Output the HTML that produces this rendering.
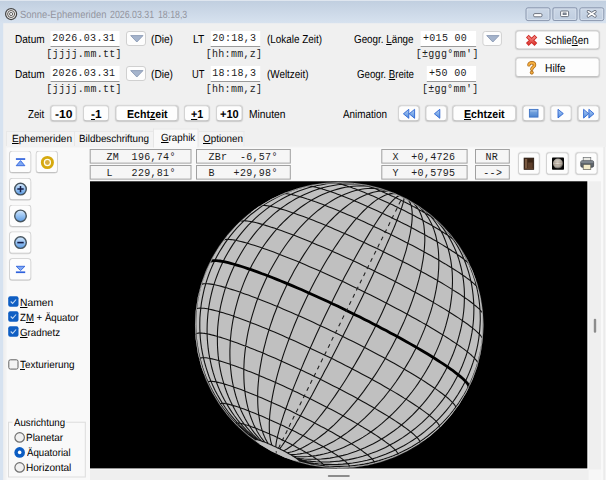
<!DOCTYPE html>
<html><head><meta charset="utf-8"><title>Sonne-Ephemeriden</title>
<style>
*{box-sizing:border-box;margin:0;padding:0}
html,body{width:606px;height:480px;overflow:hidden;background:#f0f0f0}
body{font-family:"Liberation Sans",sans-serif;color:#000;position:relative}
.a{position:absolute}
.t{position:absolute;white-space:nowrap;line-height:14px;text-rendering:geometricPrecision;transform-origin:0 0;font-family:"Liberation Sans",sans-serif}
.b{font-weight:bold}
.m{position:absolute;white-space:pre;line-height:13px;letter-spacing:0.3px;font-family:"Liberation Mono",monospace}
u{text-decoration:underline;text-underline-offset:1px}
</style></head><body>
<div class="a" style="left:0px;top:0px;width:606px;height:23px;transform-origin:0 0;transform:translate(0.00px,0.00px) scale(1.0000,1.0087);background:linear-gradient(#c0cedf,#d7e2ef)"></div>
<div class="a" style="left:0px;top:0px;width:606px;height:1px;background:#dfe6ef"></div>
<div class="a" style="left:0px;top:23px;width:3px;height:457px;transform-origin:0 0;transform:translate(0.00px,0.00px) scale(1.0667,1.0000);background:#d6e2f0"></div>
<svg class="a" style="left:4px;top:7px" width="14" height="14" viewBox="0 0 14 14"><circle cx="7.1" cy="7" r="5.5" fill="#f1f2f4" stroke="#454545" stroke-width="1.25"/><circle cx="7.1" cy="7" r="3.5" fill="none" stroke="#5d5750" stroke-width="1"/><circle cx="7.1" cy="7" r="1.6" fill="none" stroke="#555" stroke-width="0.9"/></svg>
<div class="t" style="left:20.12px;top:8.25px;font-size:10.5px;color:#93959f;transform:scaleX(0.8971)">Sonne-Ephemeriden</div>
<div class="t" style="left:109.63px;top:8.25px;font-size:10.5px;color:#93959f;transform:scaleX(0.8392)">2026.03.31</div>
<div class="t" style="left:157.83px;top:8.25px;font-size:10.5px;color:#93959f;transform:scaleX(0.8335)">18:18,3</div>
<div class="a" style="left:525px;top:7px;width:25px;height:14px;transform-origin:0 0;transform:translate(0.50px,0.30px) scale(1.0000,0.9857);border:1px solid #8a97ae;border-radius:2.5px;background:linear-gradient(#cbd7e6,#bfcddf);box-shadow:inset 0 0 0 1px #d9e2ee"></div>
<div class="a" style="left:552px;top:7px;width:25px;height:14px;transform-origin:0 0;transform:translate(0.40px,0.30px) scale(1.0040,0.9857);border:1px solid #8a97ae;border-radius:2.5px;background:linear-gradient(#cbd7e6,#bfcddf);box-shadow:inset 0 0 0 1px #d9e2ee"></div>
<div class="a" style="left:579px;top:7px;width:25px;height:14px;transform-origin:0 0;transform:translate(0.30px,0.30px) scale(1.0000,0.9857);border:1px solid #8a97ae;border-radius:2.5px;background:linear-gradient(#cbd7e6,#bfcddf);box-shadow:inset 0 0 0 1px #d9e2ee"></div>
<svg class="a" style="left:526px;top:7px" width="80" height="15" viewBox="0 0 80 15"><rect x="7.6" y="6.6" width="8.4" height="3.2" rx="1.2" fill="#fff" stroke="#5d6470" stroke-width="0.9"/><rect x="34.6" y="4" width="8" height="5.6" rx="1" fill="#fff" stroke="#5d6470" stroke-width="0.9"/><rect x="37" y="5.9" width="3.2" height="1.8" fill="#8a93a3" stroke="#5d6470" stroke-width="0.6"/><path d="M62.3 4.6 L69 9 M69 4.6 L62.3 9" stroke="#5d6470" stroke-width="3.2" stroke-linecap="round"/><path d="M62.3 4.6 L69 9 M69 4.6 L62.3 9" stroke="#fff" stroke-width="1.7" stroke-linecap="round"/></svg>
<div class="t" style="left:14.93px;top:33.25px;font-size:11.5px;color:#000;transform:scaleX(0.8739)">Datum</div>
<div class="a" style="left:50px;top:31px;width:69px;height:16px;transform-origin:0 0;transform:translate(0.50px,0.00px) scale(1.0000,1.0000);background:#fff;border-bottom:1px solid #9a9a9a"></div>
<div class="m" style="left:52.30px;top:32.20px;font-size:10.0px;color:#1c1c1c">2026.03.31</div>
<div class="a" style="left:126px;top:31px;width:20px;height:15px;background:#fdfdfd;border:1px solid #d0d0d0;border-radius:3px"></div>
<svg class="a" style="left:129.6px;top:35px" width="14" height="8" viewBox="0 0 14 8"><path d="M0.7 0.6 H13 L6.85 7 Z" fill="#a5b4cc" stroke="#8292ae" stroke-width="0.8" stroke-linejoin="round"/></svg>
<div class="t" style="left:151.32px;top:33.25px;font-size:11.5px;color:#000;transform:scaleX(0.8830)">(Die)</div>
<div class="m" style="left:46.30px;top:47.60px;font-size:10.0px;color:#1c1c1c">[jjjj.mm.tt]</div>
<div class="a" style="left:210px;top:31px;width:50px;height:16px;transform-origin:0 0;transform:translate(0.70px,0.00px) scale(0.9900,1.0000);background:#fff;border-bottom:1px solid #9a9a9a"></div>
<div class="m" style="left:205.70px;top:47.60px;font-size:10.0px;color:#1c1c1c">[hh:mm,z]</div>
<div class="t" style="left:14.93px;top:68.25px;font-size:11.5px;color:#000;transform:scaleX(0.8739)">Datum</div>
<div class="a" style="left:50px;top:66px;width:69px;height:16px;transform-origin:0 0;transform:translate(0.50px,0.00px) scale(1.0000,1.0000);background:#fff;border-bottom:1px solid #9a9a9a"></div>
<div class="m" style="left:52.30px;top:67.20px;font-size:10.0px;color:#1c1c1c">2026.03.31</div>
<div class="a" style="left:126px;top:66px;width:20px;height:15px;background:#fdfdfd;border:1px solid #d0d0d0;border-radius:3px"></div>
<svg class="a" style="left:129.6px;top:70px" width="14" height="8" viewBox="0 0 14 8"><path d="M0.7 0.6 H13 L6.85 7 Z" fill="#a5b4cc" stroke="#8292ae" stroke-width="0.8" stroke-linejoin="round"/></svg>
<div class="t" style="left:151.32px;top:68.25px;font-size:11.5px;color:#000;transform:scaleX(0.8830)">(Die)</div>
<div class="m" style="left:46.30px;top:82.60px;font-size:10.0px;color:#1c1c1c">[jjjj.mm.tt]</div>
<div class="a" style="left:210px;top:66px;width:50px;height:16px;transform-origin:0 0;transform:translate(0.70px,0.00px) scale(0.9900,1.0000);background:#fff;border-bottom:1px solid #9a9a9a"></div>
<div class="m" style="left:205.70px;top:82.60px;font-size:10.0px;color:#1c1c1c">[hh:mm,z]</div>
<div class="t" style="left:192.52px;top:33.25px;font-size:11.5px;color:#000;transform:scaleX(0.8912)">LT</div>
<div class="t" style="left:192.34px;top:68.25px;font-size:11.5px;color:#000;transform:scaleX(0.8154)">UT</div>
<div class="m" style="left:212.30px;top:32.20px;font-size:10.0px;color:#1c1c1c">20:18,3</div>
<div class="m" style="left:212.30px;top:67.20px;font-size:10.0px;color:#1c1c1c">18:18,3</div>
<div class="t" style="left:267.33px;top:33.25px;font-size:11.5px;color:#000;transform:scaleX(0.8606)">(Lokale Zeit)</div>
<div class="t" style="left:267.33px;top:68.25px;font-size:11.5px;color:#000;transform:scaleX(0.8584)">(Weltzeit)</div>
<div class="t" style="left:354.33px;top:33.25px;font-size:11.5px;color:#000;transform:scaleX(0.8537)">Geogr. <u>L</u>änge</div>
<div class="t" style="left:356.83px;top:68.25px;font-size:11.5px;color:#000;transform:scaleX(0.8412)">Geogr. <u>B</u>reite</div>
<div class="a" style="left:420px;top:31px;width:56px;height:16px;transform-origin:0 0;transform:translate(0.60px,0.00px) scale(0.9911,1.0000);background:#fff;border-bottom:1px solid #9a9a9a"></div>
<div class="a" style="left:426px;top:66px;width:49px;height:16px;transform-origin:0 0;transform:translate(0.80px,0.00px) scale(1.0061,1.0000);background:#fff;border-bottom:1px solid #9a9a9a"></div>
<div class="m" style="left:423.00px;top:32.20px;font-size:10.0px;color:#1c1c1c">+015 00</div>
<div class="m" style="left:429.00px;top:67.20px;font-size:10.0px;color:#1c1c1c">+50 00</div>
<div class="a" style="left:482px;top:31px;width:20px;height:15px;transform-origin:0 0;transform:translate(0.40px,0.00px) scale(0.9750,1.0000);background:#fdfdfd;border:1px solid #d0d0d0;border-radius:3px"></div>
<svg class="a" style="left:485.6px;top:35px" width="14" height="8" viewBox="0 0 14 8"><path d="M0.7 0.6 H13 L6.85 7 Z" fill="#a5b4cc" stroke="#8292ae" stroke-width="0.8" stroke-linejoin="round"/></svg>
<div class="m" style="left:415.70px;top:47.60px;font-size:10.0px;color:#1c1c1c">[±ggg°mm']</div>
<div class="m" style="left:421.90px;top:82.60px;font-size:10.0px;color:#1c1c1c">[±gg°mm']</div>
<div class="a" style="left:515px;top:30px;width:84px;height:19px;transform-origin:0 0;transform:translate(0.40px,0.40px) scale(1.0024,1.0105);background:#fdfdfd;border:1px solid #d3d3d3;border-bottom-color:#c2c2c2;border-radius:3.5px;box-shadow:0 0 1.2px rgba(0,0,0,0.16)"></div>
<div class="a" style="left:515px;top:57px;width:84px;height:19px;transform-origin:0 0;transform:translate(0.40px,0.60px) scale(1.0024,1.0211);background:#fdfdfd;border:1px solid #d3d3d3;border-bottom-color:#c2c2c2;border-radius:3.5px;box-shadow:0 0 1.2px rgba(0,0,0,0.16)"></div>
<div class="t" style="left:545.33px;top:34.25px;font-size:11.5px;color:#000;transform:scaleX(0.8546)">Schlie<u>ß</u>en</div>
<div class="t" style="left:545.32px;top:62.25px;font-size:11.5px;color:#000;transform:scaleX(0.8911)">Hilfe</div>
<svg class="a" style="left:524.5px;top:34px" width="14" height="13" viewBox="0 0 14 13"><defs><linearGradient id="rx" x1="0" y1="0" x2="0" y2="1"><stop offset="0" stop-color="#f58a84"/><stop offset="1" stop-color="#dc3a34"/></linearGradient></defs><path d="M2.3 2.1 L10.9 10.5 M10.9 2.1 L2.3 10.5" stroke="#cf2a26" stroke-width="3.9" stroke-linecap="butt"/><path d="M2.9 2.7 L10.3 9.9 M10.3 2.7 L2.9 9.9" stroke="url(#rx)" stroke-width="2.1" stroke-linecap="butt"/></svg>
<svg class="a" style="left:525.6px;top:60.6px" width="12" height="15" viewBox="0 0 12 15"><path d="M2.9 3.9 C2.9 1.0 8.6 1.0 8.6 3.9 C8.6 6.1 5.8 6 5.8 8.3" fill="none" stroke="#a86410" stroke-width="3.3" stroke-linecap="round"/><path d="M2.9 3.9 C2.9 1.0 8.6 1.0 8.6 3.9 C8.6 6.1 5.8 6 5.8 8.3" fill="none" stroke="#f6b040" stroke-width="1.8" stroke-linecap="round"/><circle cx="5.8" cy="11.6" r="1.55" fill="#f6b040" stroke="#a86410" stroke-width="0.9"/></svg>
<div class="t" style="left:27.73px;top:108.25px;font-size:11.5px;color:#000;transform:scaleX(0.8451)">Zeit</div>
<div class="t" style="left:249.42px;top:108.25px;font-size:11.5px;color:#000;transform:scaleX(0.8921)">Minuten</div>
<div class="t" style="left:343.08px;top:108.25px;font-size:11.5px;color:#000;transform:scaleX(0.8604)">Animation</div>
<div class="a" style="left:50px;top:105px;width:26px;height:16px;transform-origin:0 0;transform:translate(0.50px,0.30px) scale(1.0000,1.0000);background:#fdfdfd;border:1px solid #d3d3d3;border-bottom-color:#c2c2c2;border-radius:3.5px;box-shadow:0 0 1.2px rgba(0,0,0,0.16)"></div>
<div class="a" style="left:83px;top:105px;width:26px;height:16px;transform-origin:0 0;transform:translate(0.00px,0.30px) scale(1.0000,1.0000);background:#fdfdfd;border:1px solid #d3d3d3;border-bottom-color:#c2c2c2;border-radius:3.5px;box-shadow:0 0 1.2px rgba(0,0,0,0.16)"></div>
<div class="a" style="left:115px;top:105px;width:62px;height:16px;transform-origin:0 0;transform:translate(0.50px,0.30px) scale(1.0081,1.0000);background:#fdfdfd;border:1px solid #d3d3d3;border-bottom-color:#c2c2c2;border-radius:3.5px;box-shadow:0 0 1.2px rgba(0,0,0,0.16)"></div>
<div class="a" style="left:184px;top:105px;width:26px;height:16px;transform-origin:0 0;transform:translate(0.00px,0.30px) scale(0.9808,1.0000);background:#fdfdfd;border:1px solid #d3d3d3;border-bottom-color:#c2c2c2;border-radius:3.5px;box-shadow:0 0 1.2px rgba(0,0,0,0.16)"></div>
<div class="a" style="left:216px;top:105px;width:26px;height:16px;transform-origin:0 0;transform:translate(0.00px,0.30px) scale(1.0192,1.0000);background:#fdfdfd;border:1px solid #d3d3d3;border-bottom-color:#c2c2c2;border-radius:3.5px;box-shadow:0 0 1.2px rgba(0,0,0,0.16)"></div>
<div class="a" style="left:398px;top:105px;width:22px;height:16px;transform-origin:0 0;transform:translate(0.00px,0.30px) scale(0.9773,1.0000);background:#fdfdfd;border:1px solid #d3d3d3;border-bottom-color:#c2c2c2;border-radius:3.5px;box-shadow:0 0 1.2px rgba(0,0,0,0.16)"></div>
<div class="a" style="left:425px;top:105px;width:22px;height:16px;transform-origin:0 0;transform:translate(0.50px,0.30px) scale(0.9773,1.0000);background:#fdfdfd;border:1px solid #d3d3d3;border-bottom-color:#c2c2c2;border-radius:3.5px;box-shadow:0 0 1.2px rgba(0,0,0,0.16)"></div>
<div class="a" style="left:452px;top:105px;width:64px;height:16px;transform-origin:0 0;transform:translate(0.50px,0.30px) scale(0.9922,1.0000);background:#fdfdfd;border:1px solid #d3d3d3;border-bottom-color:#c2c2c2;border-radius:3.5px;box-shadow:0 0 1.2px rgba(0,0,0,0.16)"></div>
<div class="a" style="left:522px;top:105px;width:22px;height:16px;transform-origin:0 0;transform:translate(0.50px,0.30px) scale(0.9909,1.0000);background:#fdfdfd;border:1px solid #d3d3d3;border-bottom-color:#c2c2c2;border-radius:3.5px;box-shadow:0 0 1.2px rgba(0,0,0,0.16)"></div>
<div class="a" style="left:550px;top:105px;width:21px;height:16px;transform-origin:0 0;transform:translate(0.30px,0.30px) scale(1.0190,1.0000);background:#fdfdfd;border:1px solid #d3d3d3;border-bottom-color:#c2c2c2;border-radius:3.5px;box-shadow:0 0 1.2px rgba(0,0,0,0.16)"></div>
<div class="a" style="left:577px;top:105px;width:22px;height:16px;transform-origin:0 0;transform:translate(0.70px,0.30px) scale(0.9864,1.0000);background:#fdfdfd;border:1px solid #d3d3d3;border-bottom-color:#c2c2c2;border-radius:3.5px;box-shadow:0 0 1.2px rgba(0,0,0,0.16)"></div>
<div class="t b" style="left:55.29px;top:108.25px;font-size:11.5px;color:#000;transform:scaleX(1.0529)">-10</div>
<div class="t b" style="left:91.04px;top:108.25px;font-size:11.5px;color:#000;transform:scaleX(1.0269)"><u>-</u>1</div>
<div class="t b" style="left:127.12px;top:108.25px;font-size:11.5px;color:#000;transform:scaleX(0.9208)">Echt<u>z</u>eit</div>
<div class="t b" style="left:191.06px;top:108.25px;font-size:11.5px;color:#000;transform:scaleX(0.9343)"><u>+</u>1</div>
<div class="t b" style="left:220.31px;top:108.25px;font-size:11.5px;color:#000;transform:scaleX(0.9612)">+10</div>
<div class="t b" style="left:464.12px;top:108.25px;font-size:11.5px;color:#000;transform:scaleX(0.9208)"><u>E</u>chtzeit</div>
<svg class="a" style="left:396px;top:104px" width="210" height="19" viewBox="0 0 210 19"><defs><linearGradient id="bg" x1="0" y1="0" x2="0" y2="1"><stop offset="0" stop-color="#b2cef3"/><stop offset="1" stop-color="#4f8bde"/></linearGradient><linearGradient id="bs" x1="0" y1="0" x2="0" y2="1"><stop offset="0" stop-color="#86b0e4"/><stop offset="1" stop-color="#4a83cf"/></linearGradient></defs><g fill="url(#bg)" stroke="#2c65d2" stroke-width="0.9" stroke-linejoin="round"><path d="M12.8 5.3 V14.3 L7.4 9.8 Z"/><path d="M18.6 5.3 V14.3 L13.2 9.8 Z"/><path d="M43.8 5.3 V14.3 L38.4 9.8 Z"/><path d="M162 5.3 V13.9 L167.3 9.6 Z"/><path d="M187.6 5.3 V14.1 L192.7 9.7 Z"/><path d="M192.9 5.3 V14.1 L198 9.7 Z"/></g><rect x="133.4" y="5.4" width="8.6" height="7.7" fill="url(#bs)" stroke="#3f74c6" stroke-width="0.9"/><rect x="134.3" y="6.3" width="6.8" height="1.2" fill="#a8c6ee" opacity="0.7"/></svg>
<div class="a" style="left:6px;top:131px;width:238px;height:16px;transform-origin:0 0;transform:translate(0.00px,0.00px) scale(1.0021,1.0000);background:#f3f3f3;border:1px solid #e8e8e8;border-bottom:none"></div>
<div class="a" style="left:74px;top:131px;width:1px;height:15px;background:#e8e8e8"></div>
<div class="a" style="left:153px;top:131px;width:1px;height:15px;background:#e8e8e8"></div>
<div class="a" style="left:198px;top:131px;width:1px;height:15px;background:#e8e8e8"></div>
<div class="a" style="left:5px;top:146px;width:598px;height:334px;transform-origin:0 0;transform:translate(0.80px,0.30px) scale(1.0000,1.0000);background:#f9f9f9;border-top:1px solid #efefef;border-left:1px solid #f4f4f4"></div>
<div class="a" style="left:153px;top:128px;width:46px;height:19px;transform-origin:0 0;transform:translate(0.00px,0.50px) scale(0.9891,1.0000);background:#f9f9f9;border:1px solid #e6e6e6;border-bottom:none"></div>
<div class="t" style="left:11.91px;top:132.75px;font-size:10.4px;color:#000;transform:scaleX(0.9708)"><u>E</u>phemeriden</div>
<div class="t" style="left:78.91px;top:132.75px;font-size:10.4px;color:#000;transform:scaleX(0.9468)">Bildbeschriftung</div>
<div class="t" style="left:161.11px;top:131.75px;font-size:10.4px;color:#000;transform:scaleX(0.9400)"><u>G</u>raphik</div>
<div class="t" style="left:202.71px;top:132.75px;font-size:10.4px;color:#000;transform:scaleX(0.9485)"><u>O</u>ptionen</div>
<div class="a" style="left:89px;top:149px;width:102px;height:15px;transform-origin:0 0;transform:translate(0.70px,0.00px) scale(0.9980,0.9733);background:#f6f6f6;border:1px solid #a0a0a0"></div>
<div class="a" style="left:89px;top:165px;width:102px;height:15px;transform-origin:0 0;transform:translate(0.70px,0.00px) scale(0.9980,0.9733);background:#f6f6f6;border:1px solid #a0a0a0"></div>
<div class="a" style="left:196px;top:149px;width:95px;height:15px;transform-origin:0 0;transform:translate(0.00px,0.00px) scale(0.9979,0.9733);background:#f6f6f6;border:1px solid #a0a0a0"></div>
<div class="a" style="left:196px;top:165px;width:95px;height:15px;transform-origin:0 0;transform:translate(0.00px,0.00px) scale(0.9979,0.9733);background:#f6f6f6;border:1px solid #a0a0a0"></div>
<div class="a" style="left:381px;top:149px;width:86px;height:15px;transform-origin:0 0;transform:translate(0.30px,0.00px) scale(1.0035,0.9733);background:#f6f6f6;border:1px solid #a0a0a0"></div>
<div class="a" style="left:381px;top:165px;width:86px;height:15px;transform-origin:0 0;transform:translate(0.30px,0.00px) scale(1.0035,0.9733);background:#f6f6f6;border:1px solid #a0a0a0"></div>
<div class="a" style="left:475px;top:149px;width:35px;height:15px;transform-origin:0 0;transform:translate(0.00px,0.00px) scale(0.9943,0.9733);background:#f6f6f6;border:1px solid #a0a0a0"></div>
<div class="a" style="left:475px;top:165px;width:35px;height:15px;transform-origin:0 0;transform:translate(0.00px,0.00px) scale(0.9943,0.9733);background:#f6f6f6;border:1px solid #a0a0a0"></div>
<div class="m" style="left:106.40px;top:151.00px;font-size:10.0px;color:#1c1c1c">ZM&nbsp; 196,74°</div>
<div class="m" style="left:106.40px;top:167.00px;font-size:10.0px;color:#1c1c1c">L&nbsp;&nbsp; 229,81°</div>
<div class="m" style="left:208.40px;top:151.00px;font-size:10.0px;color:#1c1c1c">ZBr&nbsp; -6,57°</div>
<div class="m" style="left:208.40px;top:167.00px;font-size:10.0px;color:#1c1c1c">B&nbsp;&nbsp; +29,98°</div>
<div class="m" style="left:392.40px;top:151.00px;font-size:10.0px;color:#1c1c1c">X&nbsp; +0,4726</div>
<div class="m" style="left:392.40px;top:167.00px;font-size:10.0px;color:#1c1c1c">Y&nbsp; +0,5795</div>
<div class="m" style="left:485.40px;top:151.00px;font-size:10.0px;color:#1c1c1c">NR</div>
<div class="m" style="left:483.30px;top:167.00px;font-size:10.0px;color:#1c1c1c">--&gt;</div>
<div class="a" style="left:518px;top:152px;width:22px;height:22px;transform-origin:0 0;transform:translate(0.00px,0.30px) scale(0.9909,1.0227);background:#fdfdfd;border:1px solid #d3d3d3;border-bottom-color:#c2c2c2;border-radius:3.5px;box-shadow:0 0 1.2px rgba(0,0,0,0.16)"></div>
<div class="a" style="left:546px;top:152px;width:23px;height:22px;transform-origin:0 0;transform:translate(0.00px,0.30px) scale(0.9870,1.0227);background:#fdfdfd;border:1px solid #d3d3d3;border-bottom-color:#c2c2c2;border-radius:3.5px;box-shadow:0 0 1.2px rgba(0,0,0,0.16)"></div>
<div class="a" style="left:575px;top:152px;width:22px;height:22px;transform-origin:0 0;transform:translate(0.40px,0.30px) scale(1.0091,1.0227);background:#fdfdfd;border:1px solid #d3d3d3;border-bottom-color:#c2c2c2;border-radius:3.5px;box-shadow:0 0 1.2px rgba(0,0,0,0.16)"></div>
<svg class="a" style="left:518px;top:152px" width="82" height="24" viewBox="0 0 82 24"><defs><radialGradient id="jp" cx="0.45" cy="0.42" r="0.6"><stop offset="0" stop-color="#e6e1d8"/><stop offset="0.7" stop-color="#a9a39a"/><stop offset="1" stop-color="#3a3835"/></radialGradient></defs><rect x="6.1" y="6.1" width="9.6" height="11.2" fill="#3b2415" stroke="#24140a" stroke-width="0.8"/><rect x="7" y="7" width="2.2" height="9.4" fill="#7a5a42"/><path d="M9.6 10.5 H14.6 V16.2 H9.6 Z" fill="#5c3e2a"/><path d="M6.5 16.6 H15.3" stroke="#6b4a32" stroke-width="0.8"/><rect x="34" y="5.6" width="12" height="12.1" rx="0.8" fill="#050505"/><circle cx="40" cy="11.6" r="5" fill="url(#jp)"/><path d="M35.8 10.2 H44.2 M35.6 12.7 H44.4" stroke="#9a7f6c" stroke-width="0.8" opacity="0.55"/><rect x="65.2" y="5.4" width="7.6" height="5" fill="#e9e9e4" stroke="#6a6d70" stroke-width="0.7"/><rect x="62.8" y="8.8" width="12.8" height="6.4" rx="1.4" fill="#5e656c" stroke="#3c4045" stroke-width="0.8"/><rect x="62.8" y="8.8" width="12.8" height="2.2" rx="1" fill="#7d848b"/><rect x="65.2" y="12.4" width="7.6" height="5.2" fill="#f3ebc9" stroke="#5a5a55" stroke-width="0.7"/></svg>
<div class="a" style="left:90px;top:181px;width:497px;height:287px;transform-origin:0 0;transform:translate(0.00px,0.30px) scale(1.0006,1.0003);background:#000"></div>
<svg class="a" style="left:0;top:0" width="606" height="480" viewBox="0 0 606 480"><defs><clipPath id="vp"><rect x="90" y="181.3" width="497.3" height="287.1"/></clipPath></defs><g clip-path="url(#vp)">
<ellipse cx="339.25" cy="325.15" rx="144.25" ry="143.00" fill="#c0c0c0"/>
<path d="M259.1 444.1 L258.7 443.7 L258.2 443.4 L257.8 443.2 L257.4 442.9 L257.1 442.6 L256.7 442.3 L256.4 442.1 L256.1 441.8 L255.8 441.6 L255.6 441.4 L255.4 441.2 L255.2 441.0 L255.0 440.8 L254.9 440.6 L254.8 440.5 L254.7 440.3 L254.7 440.2 L254.6 440.1 L254.6 440.0 L254.7 439.9 L254.7 439.8 L254.8 439.7 L254.9 439.7 L255.1 439.6 L255.2 439.6 L255.4 439.6 L255.6 439.6 L255.9 439.6 L256.2 439.6 L256.5 439.6 L256.8 439.7 L257.1 439.8 L257.5 439.8 L257.9 439.9 L258.3 440.0 L258.8 440.2 L259.2 440.3 L259.7 440.4 L260.2 440.6 L260.7 440.8 L261.3 441.0 L261.9 441.2 L262.4 441.4 L263.0 441.6 L263.7 441.8 L264.3 442.1 L265.0 442.3 L265.6 442.6 L266.3 442.8 L267.0 443.1 L267.7 443.4 L268.4 443.7 L269.2 444.0 L269.9 444.3 L270.7 444.7 L271.4 445.0 L272.2 445.3 L272.9 445.7 L273.7 446.0 L274.5 446.4 L275.3 446.7 L276.1 447.1 L276.9 447.5 L277.6 447.9 L278.4 448.2 L279.2 448.6 L280.0 449.0 L280.8 449.4 L281.5 449.8 L282.3 450.2 L283.1 450.6 L283.8 451.0 L284.6 451.3 L285.3 451.7 L286.0 452.1 L286.8 452.5 L287.5 452.9 L288.2 453.3 L288.8 453.7 L289.5 454.0 L290.2 454.4 L290.8 454.8 L291.4 455.1 L292.0 455.5 L292.6 455.9 L293.2 456.2 L293.7 456.5 L294.2 456.9 L294.7 457.2 L295.2 457.5 L295.7 457.8 L296.1 458.1 L296.5 458.4 L296.9 458.7 L297.3 459.0 L297.6 459.2 L297.9 459.5 L298.2 459.7 L298.5 460.0 L298.7 460.2 L298.9 460.4 L299.1 460.6 L299.3 460.8 L299.4 460.9 L299.5 461.1 L299.6 461.2 L299.7 461.4 L299.7 461.5 L299.7 461.6 L299.7 461.7 L299.6 461.8 L299.5 461.9 L299.4 461.9 L299.3 462.0 L299.1 462.0 L298.9 462.0 L298.7 462.0 L298.4 462.0 L298.2 462.0 L297.9 461.9 L297.5 461.9 L297.2 461.8 L296.8 461.7 L296.4 461.6 L296.0 461.5 L295.6 461.4 L295.1 461.3 L294.6 461.1 L294.1 461.0 L293.6 460.8M237.1 426.1 L236.7 425.7 L236.4 425.4 L236.2 425.0 L235.9 424.7 L235.8 424.4 L235.7 424.2 L235.6 423.9 L235.6 423.7 L235.7 423.5 L235.8 423.4 L236.0 423.2 L236.2 423.1 L236.5 423.0 L236.8 423.0 L237.2 422.9 L237.6 422.9 L238.1 423.0 L238.6 423.0 L239.2 423.1 L239.9 423.2 L240.5 423.3 L241.3 423.5 L242.1 423.7 L242.9 423.9 L243.8 424.1 L244.7 424.4 L245.6 424.7 L246.6 425.0 L247.7 425.3 L248.7 425.7 L249.9 426.1 L251.0 426.5 L252.2 426.9 L253.4 427.4 L254.7 427.8 L256.0 428.3 L257.3 428.8 L258.6 429.4 L260.0 429.9 L261.4 430.5 L262.8 431.1 L264.3 431.7 L265.7 432.3 L267.2 432.9 L268.7 433.6 L270.2 434.3 L271.7 434.9 L273.2 435.6 L274.8 436.3 L276.3 437.1 L277.8 437.8 L279.4 438.5 L280.9 439.3 L282.5 440.0 L284.0 440.8 L285.6 441.5 L287.1 442.3 L288.6 443.0 L290.1 443.8 L291.6 444.6 L293.1 445.4 L294.6 446.1 L296.1 446.9 L297.5 447.7 L298.9 448.4 L300.3 449.2 L301.7 449.9 L303.0 450.7 L304.3 451.4 L305.6 452.2 L306.8 452.9 L308.1 453.6 L309.2 454.3 L310.4 455.0 L311.5 455.7 L312.6 456.4 L313.6 457.0 L314.6 457.7 L315.5 458.3 L316.4 458.9 L317.3 459.5 L318.1 460.1 L318.9 460.6 L319.6 461.2 L320.3 461.7 L320.9 462.2 L321.5 462.6 L322.0 463.1 L322.5 463.5 L322.9 463.9 L323.3 464.3 L323.6 464.7 L323.9 465.0 L324.1 465.3 L324.2 465.6 L324.3 465.9 L324.4 466.1 L324.4 466.4 L324.3 466.5 L324.2 466.7 L324.0 466.8 L323.8 467.0 L323.5 467.0 L323.2 467.1 L322.8 467.1 L322.4 467.1 L321.9 467.1 L321.4 467.0M220.2 405.9 L220.0 405.5 L219.9 405.1 L219.8 404.8 L219.8 404.5 L219.9 404.2 L220.0 403.9 L220.3 403.7 L220.6 403.6 L221.0 403.5 L221.5 403.4 L222.1 403.3 L222.7 403.3 L223.4 403.4 L224.2 403.4 L225.0 403.6 L226.0 403.7 L227.0 403.9 L228.0 404.1 L229.2 404.4 L230.4 404.7 L231.6 405.1 L233.0 405.4 L234.4 405.9 L235.8 406.3 L237.4 406.8 L238.9 407.3 L240.6 407.9 L242.3 408.5 L244.0 409.1 L245.8 409.8 L247.6 410.5 L249.5 411.2 L251.4 412.0 L253.4 412.7 L255.4 413.5 L257.4 414.4 L259.5 415.2 L261.6 416.1 L263.8 417.0 L265.9 418.0 L268.1 418.9 L270.3 419.9 L272.5 420.9 L274.7 421.9 L277.0 422.9 L279.2 424.0 L281.5 425.0 L283.8 426.1 L286.0 427.2 L288.3 428.3 L290.5 429.4 L292.8 430.5 L295.0 431.6 L297.3 432.7 L299.5 433.9 L301.7 435.0 L303.8 436.1 L306.0 437.2 L308.1 438.4 L310.2 439.5 L312.3 440.6 L314.3 441.7 L316.3 442.8 L318.3 443.9 L320.2 445.0 L322.1 446.1 L323.9 447.1 L325.7 448.2 L327.4 449.2 L329.1 450.2 L330.7 451.2 L332.3 452.2 L333.8 453.2 L335.2 454.1 L336.6 455.0 L337.9 455.9 L339.2 456.8 L340.4 457.6 L341.5 458.4 L342.6 459.2 L343.5 460.0 L344.5 460.7 L345.3 461.4 L346.1 462.0 L346.8 462.7 L347.4 463.3 L347.9 463.8 L348.4 464.4 L348.8 464.9 L349.1 465.3 L349.3 465.8 L349.4 466.1 L349.5 466.5 L349.5 466.8 L349.4 467.1 L349.3 467.3 L349.0 467.5 L348.7 467.7 L348.3 467.8 L347.8 467.9M207.7 383.6 L207.6 383.2 L207.6 382.8 L207.7 382.4 L207.9 382.1 L208.2 381.9 L208.6 381.7 L209.1 381.5 L209.8 381.4 L210.5 381.4 L211.3 381.4 L212.2 381.4 L213.2 381.5 L214.3 381.6 L215.5 381.8 L216.8 382.1 L218.2 382.4 L219.6 382.7 L221.2 383.1 L222.8 383.6 L224.5 384.1 L226.3 384.6 L228.2 385.2 L230.2 385.8 L232.2 386.5 L234.3 387.2 L236.5 388.0 L238.7 388.8 L241.0 389.6 L243.4 390.5 L245.8 391.5 L248.3 392.4 L250.8 393.4 L253.4 394.5 L256.0 395.6 L258.6 396.7 L261.4 397.8 L264.1 399.0 L266.9 400.2 L269.7 401.4 L272.5 402.7 L275.3 403.9 L278.2 405.2 L281.1 406.6 L284.0 407.9 L286.9 409.3 L289.8 410.6 L292.7 412.0 L295.6 413.4 L298.5 414.9 L301.4 416.3 L304.3 417.7 L307.2 419.2 L310.0 420.6 L312.8 422.0 L315.6 423.5 L318.4 424.9 L321.1 426.4 L323.8 427.8 L326.5 429.3 L329.1 430.7 L331.7 432.1 L334.2 433.5 L336.6 434.9 L339.0 436.3 L341.4 437.7 L343.7 439.0 L345.9 440.3 L348.1 441.6 L350.1 442.9 L352.2 444.2 L354.1 445.4 L356.0 446.6 L357.7 447.8 L359.4 448.9 L361.1 450.0 L362.6 451.1 L364.0 452.2 L365.4 453.2 L366.7 454.1 L367.8 455.1 L368.9 456.0 L369.9 456.8 L370.8 457.6 L371.6 458.4 L372.3 459.1 L372.9 459.8 L373.4 460.5 L373.8 461.1 L374.1 461.6 L374.3 462.1 L374.3 462.6 L374.3 463.0 L374.2 463.3 L374.0 463.6 L373.7 463.9 L373.3 464.1M199.3 359.9 L199.4 359.4 L199.5 359.0 L199.7 358.6 L200.1 358.3 L200.6 358.0 L201.2 357.9 L202.0 357.7 L202.8 357.7 L203.8 357.7 L204.9 357.7 L206.1 357.8 L207.4 358.0 L208.8 358.3 L210.3 358.5 L212.0 358.9 L213.7 359.3 L215.6 359.8 L217.5 360.3 L219.6 360.9 L221.7 361.5 L224.0 362.2 L226.3 363.0 L228.7 363.8 L231.2 364.7 L233.8 365.6 L236.5 366.5 L239.2 367.6 L242.0 368.6 L244.9 369.7 L247.8 370.9 L250.9 372.1 L253.9 373.3 L257.0 374.6 L260.2 375.9 L263.4 377.3 L266.7 378.7 L270.0 380.1 L273.4 381.6 L276.7 383.1 L280.1 384.6 L283.5 386.1 L287.0 387.7 L290.4 389.3 L293.9 390.9 L297.4 392.6 L300.8 394.2 L304.3 395.9 L307.7 397.6 L311.2 399.3 L314.6 401.0 L318.0 402.7 L321.4 404.4 L324.8 406.2 L328.1 407.9 L331.4 409.6 L334.7 411.3 L337.9 413.1 L341.1 414.8 L344.2 416.5 L347.2 418.2 L350.2 419.8 L353.2 421.5 L356.0 423.1 L358.8 424.8 L361.6 426.4 L364.2 428.0 L366.8 429.5 L369.3 431.0 L371.7 432.5 L374.0 434.0 L376.2 435.4 L378.3 436.8 L380.3 438.2 L382.3 439.5 L384.1 440.8 L385.8 442.1 L387.4 443.3 L389.0 444.4 L390.4 445.5 L391.6 446.6 L392.8 447.6 L393.9 448.6 L394.8 449.5 L395.6 450.4 L396.4 451.2 L396.9 452.0 L397.4 452.7 L397.8 453.3 L398.0 453.9 L398.1 454.4 L398.1 454.9 L398.0 455.3 L397.7 455.7 L397.3 456.0M195.4 334.9 L195.5 334.5 L195.8 334.0 L196.3 333.7 L196.8 333.4 L197.5 333.2 L198.3 333.1 L199.3 333.0 L200.4 333.0 L201.6 333.1 L203.0 333.2 L204.5 333.4 L206.1 333.7 L207.8 334.0 L209.7 334.4 L211.6 334.9 L213.7 335.4 L215.9 336.0 L218.2 336.7 L220.7 337.4 L223.2 338.2 L225.8 339.0 L228.6 339.9 L231.4 340.9 L234.3 341.9 L237.3 343.0 L240.4 344.2 L243.6 345.4 L246.9 346.6 L250.2 347.9 L253.6 349.3 L257.1 350.7 L260.6 352.1 L264.2 353.6 L267.8 355.2 L271.5 356.7 L275.3 358.3 L279.0 360.0 L282.8 361.7 L286.7 363.4 L290.6 365.2 L294.4 366.9 L298.3 368.8 L302.3 370.6 L306.2 372.4 L310.1 374.3 L314.0 376.2 L317.9 378.1 L321.8 380.0 L325.7 382.0 L329.6 383.9 L333.4 385.9 L337.2 387.8 L341.0 389.8 L344.7 391.7 L348.4 393.7 L352.0 395.6 L355.6 397.5 L359.1 399.5 L362.6 401.4 L365.9 403.3 L369.3 405.2 L372.5 407.0 L375.7 408.9 L378.8 410.7 L381.8 412.5 L384.7 414.2 L387.5 415.9 L390.2 417.6 L392.8 419.3 L395.3 420.9 L397.7 422.5 L400.0 424.0 L402.2 425.5 L404.2 427.0 L406.2 428.4 L408.0 429.8 L409.7 431.1 L411.3 432.3 L412.8 433.5 L414.1 434.7 L415.3 435.8 L416.4 436.8 L417.3 437.8 L418.1 438.7 L418.8 439.6 L419.3 440.4 L419.7 441.1 L420.0 441.8 L420.1 442.4 L420.1 442.9 L419.9 443.4 L419.6 443.8M195.8 310.2 L196.0 309.7 L196.3 309.2 L196.7 308.8 L197.3 308.5 L198.1 308.3 L199.0 308.2 L200.0 308.1 L201.2 308.1 L202.6 308.2 L204.0 308.3 L205.6 308.5 L207.4 308.8 L209.3 309.2 L211.3 309.6 L213.4 310.1 L215.7 310.7 L218.1 311.3 L220.6 312.1 L223.2 312.8 L226.0 313.7 L228.8 314.6 L231.8 315.6 L234.9 316.7 L238.0 317.8 L241.3 319.0 L244.7 320.2 L248.1 321.5 L251.7 322.9 L255.3 324.3 L259.0 325.7 L262.7 327.3 L266.6 328.8 L270.5 330.5 L274.4 332.1 L278.4 333.8 L282.5 335.6 L286.6 337.4 L290.7 339.2 L294.9 341.1 L299.1 343.0 L303.3 344.9 L307.5 346.9 L311.7 348.9 L316.0 350.9 L320.3 352.9 L324.5 355.0 L328.8 357.0 L333.0 359.1 L337.2 361.2 L341.4 363.3 L345.5 365.5 L349.7 367.6 L353.8 369.7 L357.8 371.8 L361.8 373.9 L365.7 376.0 L369.6 378.1 L373.4 380.2 L377.2 382.3 L380.9 384.3 L384.5 386.4 L388.0 388.4 L391.4 390.4 L394.8 392.4 L398.0 394.3 L401.2 396.2 L404.2 398.1 L407.2 399.9 L410.0 401.7 L412.7 403.5 L415.3 405.2 L417.8 406.9 L420.2 408.5 L422.4 410.1 L424.5 411.6 L426.5 413.1 L428.4 414.5 L430.1 415.9 L431.7 417.2 L433.1 418.4 L434.4 419.6 L435.6 420.7 L436.6 421.8 L437.5 422.8 L438.2 423.7 L438.8 424.6 L439.2 425.4 L439.5 426.1 L439.6 426.8 L439.6 427.4 L439.4 427.9 L439.1 428.3M200.7 285.3 L201.1 284.9 L201.5 284.5 L202.2 284.2 L203.0 283.9 L203.9 283.8 L205.0 283.7 L206.2 283.7 L207.6 283.8 L209.2 283.9 L210.9 284.1 L212.7 284.4 L214.7 284.8 L216.8 285.3 L219.0 285.8 L221.4 286.4 L223.9 287.1 L226.5 287.8 L229.3 288.7 L232.2 289.6 L235.2 290.5 L238.3 291.6 L241.5 292.7 L244.8 293.9 L248.3 295.1 L251.8 296.4 L255.4 297.8 L259.1 299.2 L262.9 300.7 L266.8 302.2 L270.7 303.8 L274.7 305.4 L278.8 307.1 L282.9 308.9 L287.1 310.7 L291.4 312.5 L295.7 314.4 L300.0 316.3 L304.4 318.3 L308.8 320.3 L313.2 322.3 L317.6 324.4 L322.1 326.4 L326.5 328.5 L331.0 330.7 L335.5 332.8 L339.9 335.0 L344.3 337.2 L348.7 339.4 L353.1 341.6 L357.5 343.8 L361.8 346.0 L366.1 348.3 L370.3 350.5 L374.5 352.7 L378.7 354.9 L382.7 357.1 L386.7 359.3 L390.7 361.5 L394.5 363.6 L398.3 365.7 L402.0 367.9 L405.6 370.0 L409.1 372.0 L412.5 374.0 L415.8 376.0 L419.0 378.0 L422.1 379.9 L425.0 381.8 L427.9 383.7 L430.6 385.5 L433.2 387.2 L435.7 388.9 L438.1 390.6 L440.3 392.2 L442.4 393.7 L444.3 395.2 L446.1 396.6 L447.8 398.0 L449.3 399.3 L450.6 400.6 L451.8 401.8 L452.9 402.9 L453.8 403.9 L454.6 404.9 L455.2 405.8 L455.6 406.6 L455.9 407.4 L456.1 408.1 L456.0 408.7 L455.9 409.3M223.0 240.6 L223.4 240.2 L224.1 239.9 L224.9 239.6 L225.8 239.5 L226.9 239.4 L228.1 239.4 L229.5 239.5 L231.1 239.6 L232.8 239.8 L234.6 240.1 L236.6 240.5 L238.7 241.0 L240.9 241.5 L243.3 242.1 L245.8 242.8 L248.4 243.5 L251.2 244.4 L254.1 245.3 L257.1 246.2 L260.2 247.3 L263.4 248.4 L266.7 249.6 L270.1 250.8 L273.7 252.1 L277.3 253.5 L281.0 254.9 L284.8 256.4 L288.7 257.9 L292.6 259.5 L296.6 261.1 L300.7 262.8 L304.8 264.6 L309.0 266.4 L313.3 268.2 L317.6 270.1 L321.9 272.0 L326.3 274.0 L330.7 276.0 L335.1 278.0 L339.5 280.0 L344.0 282.1 L348.4 284.2 L352.9 286.4 L357.3 288.5 L361.8 290.7 L366.2 292.9 L370.6 295.1 L375.0 297.3 L379.4 299.5 L383.7 301.7 L388.0 303.9 L392.2 306.2 L396.4 308.4 L400.5 310.6 L404.6 312.8 L408.6 315.0 L412.5 317.2 L416.4 319.3 L420.2 321.4 L423.9 323.6 L427.5 325.6 L431.0 327.7 L434.4 329.7 L437.7 331.7 L440.9 333.7 L444.0 335.6 L446.9 337.5 L449.8 339.4 L452.5 341.2 L455.1 342.9 L457.6 344.6 L460.0 346.3 L462.2 347.9 L464.3 349.4 L466.2 350.9 L468.0 352.3 L469.6 353.7 L471.2 355.0 L472.5 356.3 L473.7 357.4 L474.8 358.6 L475.7 359.6 L476.5 360.6 L477.1 361.5 L477.5 362.3 L477.8 363.1 L478.0 363.8 L477.9 364.4M239.9 221.6 L240.5 221.3 L241.2 221.1 L242.1 220.9 L243.2 220.8 L244.4 220.8 L245.7 220.9 L247.2 221.0 L248.8 221.2 L250.5 221.5 L252.4 221.9 L254.4 222.3 L256.5 222.8 L258.8 223.4 L261.2 224.1 L263.7 224.8 L266.3 225.6 L269.1 226.4 L271.9 227.4 L274.9 228.3 L278.0 229.4 L281.2 230.5 L284.4 231.7 L287.8 232.9 L291.2 234.2 L294.8 235.6 L298.4 237.0 L302.1 238.5 L305.9 240.0 L309.7 241.6 L313.6 243.2 L317.5 244.9 L321.5 246.6 L325.6 248.3 L329.7 250.1 L333.8 251.9 L338.0 253.8 L342.2 255.7 L346.4 257.7 L350.6 259.6 L354.9 261.6 L359.1 263.6 L363.4 265.7 L367.6 267.7 L371.9 269.8 L376.1 271.9 L380.3 274.0 L384.5 276.1 L388.7 278.2 L392.8 280.3 L396.9 282.4 L400.9 284.5 L404.9 286.7 L408.9 288.8 L412.7 290.9 L416.6 292.9 L420.3 295.0 L424.0 297.1 L427.6 299.1 L431.1 301.1 L434.5 303.1 L437.9 305.1 L441.1 307.0 L444.3 308.9 L447.3 310.8 L450.3 312.7 L453.1 314.5 L455.8 316.2 L458.4 317.9 L460.9 319.6 L463.3 321.2 L465.5 322.8 L467.7 324.3 L469.6 325.8 L471.5 327.2 L473.2 328.6 L474.8 329.9 L476.2 331.2 L477.5 332.3 L478.7 333.5 L479.7 334.5 L480.6 335.5 L481.3 336.5 L481.9 337.3 L482.3 338.1 L482.6 338.9 L482.7 339.5M259.3 206.1 L259.9 205.8 L260.6 205.6 L261.4 205.5 L262.3 205.4 L263.4 205.4 L264.7 205.5 L266.0 205.6 L267.5 205.8 L269.1 206.1 L270.8 206.4 L272.7 206.8 L274.7 207.3 L276.8 207.8 L279.0 208.4 L281.3 209.1 L283.7 209.8 L286.2 210.6 L288.9 211.4 L291.6 212.4 L294.4 213.3 L297.4 214.4 L300.4 215.5 L303.5 216.6 L306.7 217.8 L309.9 219.0 L313.3 220.3 L316.7 221.7 L320.1 223.1 L323.7 224.5 L327.2 226.0 L330.9 227.6 L334.6 229.2 L338.3 230.8 L342.1 232.4 L345.9 234.1 L349.7 235.8 L353.6 237.6 L357.5 239.4 L361.4 241.2 L365.3 243.0 L369.2 244.9 L373.1 246.7 L377.1 248.6 L381.0 250.5 L384.9 252.5 L388.8 254.4 L392.6 256.3 L396.4 258.3 L400.2 260.2 L404.0 262.2 L407.7 264.1 L411.4 266.1 L415.1 268.0 L418.6 270.0 L422.1 271.9 L425.6 273.8 L429.0 275.7 L432.3 277.6 L435.6 279.4 L438.7 281.3 L441.8 283.1 L444.8 284.9 L447.7 286.6 L450.5 288.4 L453.2 290.1 L455.8 291.7 L458.3 293.3 L460.8 294.9 L463.0 296.5 L465.2 298.0 L467.3 299.4 L469.2 300.8 L471.1 302.2 L472.8 303.5 L474.4 304.8 L475.8 306.0 L477.1 307.1 L478.3 308.2 L479.4 309.2 L480.3 310.2 L481.1 311.1 L481.8 312.0 L482.3 312.8 L482.7 313.5 L483.0 314.2 L483.1 314.8M281.7 194.0 L282.3 193.9 L283.0 193.7 L283.9 193.7 L284.8 193.7 L285.9 193.7 L287.1 193.8 L288.4 194.0 L289.8 194.2 L291.4 194.5 L293.0 194.9 L294.8 195.3 L296.6 195.8 L298.6 196.3 L300.6 196.9 L302.8 197.5 L305.0 198.2 L307.3 199.0 L309.8 199.8 L312.3 200.7 L314.8 201.6 L317.5 202.5 L320.2 203.5 L323.1 204.6 L325.9 205.7 L328.9 206.9 L331.9 208.1 L335.0 209.3 L338.1 210.6 L341.3 211.9 L344.5 213.3 L347.8 214.7 L351.1 216.1 L354.4 217.5 L357.8 219.0 L361.2 220.6 L364.6 222.1 L368.0 223.7 L371.5 225.3 L374.9 226.9 L378.4 228.6 L381.9 230.2 L385.3 231.9 L388.8 233.6 L392.2 235.3 L395.7 237.0 L399.1 238.7 L402.5 240.4 L405.8 242.2 L409.2 243.9 L412.5 245.6 L415.7 247.3 L418.9 249.1 L422.1 250.8 L425.2 252.5 L428.3 254.2 L431.3 255.8 L434.2 257.5 L437.1 259.1 L439.9 260.8 L442.6 262.4 L445.3 263.9 L447.8 265.5 L450.3 267.0 L452.7 268.5 L455.0 270.0 L457.2 271.4 L459.4 272.8 L461.4 274.2 L463.3 275.5 L465.2 276.8 L466.9 278.1 L468.5 279.3 L470.0 280.4 L471.4 281.5 L472.7 282.6 L473.9 283.6 L474.9 284.6 L475.9 285.5 L476.7 286.4 L477.4 287.2 L478.0 287.9 L478.5 288.7 L478.8 289.3 L479.0 289.9M305.7 186.1 L306.4 186.0 L307.1 185.9 L307.9 185.9 L308.8 185.9 L309.8 186.0 L310.9 186.2 L312.1 186.4 L313.4 186.6 L314.8 186.9 L316.2 187.3 L317.8 187.7 L319.4 188.1 L321.1 188.6 L322.9 189.2 L324.8 189.7 L326.8 190.4 L328.8 191.1 L330.9 191.8 L333.1 192.5 L335.3 193.3 L337.6 194.2 L340.0 195.1 L342.4 196.0 L344.9 197.0 L347.4 198.0 L350.0 199.0 L352.6 200.1 L355.2 201.2 L357.9 202.3 L360.7 203.5 L363.5 204.7 L366.3 205.9 L369.1 207.2 L371.9 208.5 L374.8 209.8 L377.7 211.1 L380.6 212.4 L383.5 213.8 L386.4 215.2 L389.3 216.6 L392.2 218.0 L395.1 219.4 L398.0 220.8 L400.9 222.3 L403.8 223.7 L406.6 225.1 L409.4 226.6 L412.2 228.0 L415.0 229.5 L417.7 230.9 L420.4 232.4 L423.1 233.8 L425.7 235.2 L428.2 236.7 L430.8 238.1 L433.2 239.5 L435.6 240.8 L438.0 242.2 L440.3 243.6 L442.5 244.9 L444.6 246.2 L446.7 247.5 L448.7 248.7 L450.7 250.0 L452.5 251.2 L454.3 252.3 L456.0 253.5 L457.7 254.6 L459.2 255.7 L460.6 256.7 L462.0 257.7 L463.3 258.7 L464.4 259.6 L465.5 260.5 L466.5 261.4 L467.4 262.2 L468.2 263.0 L468.9 263.7 L469.5 264.4 L470.0 265.0 L470.4 265.6 L470.7 266.2M331.2 182.4 L331.9 182.4 L332.6 182.4 L333.4 182.5 L334.2 182.6 L335.2 182.7 L336.2 182.9 L337.2 183.2 L338.4 183.4 L339.6 183.8 L340.8 184.1 L342.2 184.5 L343.6 184.9 L345.0 185.4 L346.6 185.8 L348.1 186.4 L349.8 186.9 L351.5 187.5 L353.2 188.2 L355.0 188.8 L356.8 189.5 L358.7 190.2 L360.6 191.0 L362.6 191.8 L364.6 192.6 L366.6 193.4 L368.7 194.3 L370.8 195.2 L373.0 196.1 L375.1 197.0 L377.3 198.0 L379.5 198.9 L381.7 199.9 L383.9 200.9 L386.2 202.0 L388.4 203.0 L390.7 204.1 L393.0 205.1 L395.2 206.2 L397.5 207.3 L399.7 208.4 L402.0 209.5 L404.2 210.6 L406.5 211.8 L408.7 212.9 L410.9 214.0 L413.0 215.1 L415.2 216.3 L417.3 217.4 L419.4 218.5 L421.5 219.6 L423.5 220.7 L425.5 221.9 L427.5 222.9 L429.4 224.0 L431.2 225.1 L433.1 226.2 L434.9 227.2 L436.6 228.2 L438.3 229.3 L439.9 230.3 L441.5 231.2 L443.0 232.2 L444.4 233.1 L445.8 234.0 L447.1 234.9 L448.4 235.8 L449.6 236.6 L450.7 237.4 L451.8 238.2 L452.7 239.0 L453.7 239.7 L454.5 240.4 L455.3 241.1 L456.0 241.7 L456.6 242.3 L457.1 242.9 L457.6 243.4 L458.0 243.9M357.7 183.3 L358.3 183.4 L359.0 183.6 L359.8 183.7 L360.5 183.9 L361.4 184.1 L362.2 184.4 L363.2 184.6 L364.1 184.9 L365.1 185.2 L366.1 185.6 L367.2 185.9 L368.3 186.3 L369.5 186.7 L370.7 187.1 L371.9 187.6 L373.2 188.1 L374.5 188.6 L375.8 189.1 L377.1 189.6 L378.5 190.2 L379.9 190.7 L381.3 191.3 L382.7 191.9 L384.2 192.5 L385.7 193.2 L387.2 193.8 L388.7 194.5 L390.2 195.2 L391.7 195.9 L393.2 196.6 L394.8 197.3 L396.3 198.0 L397.9 198.8 L399.4 199.5 L401.0 200.2 L402.5 201.0 L404.1 201.8 L405.6 202.5 L407.1 203.3 L408.6 204.1 L410.1 204.8 L411.6 205.6 L413.1 206.4 L414.5 207.1 L416.0 207.9 L417.4 208.7 L418.8 209.4 L420.1 210.2 L421.5 210.9 L422.8 211.7 L424.1 212.4 L425.3 213.1 L426.5 213.9 L427.7 214.6 L428.9 215.3 L430.0 215.9 L431.1 216.6 L432.1 217.3 L433.1 217.9 L434.0 218.5 L434.9 219.1 L435.8 219.7 L436.6 220.3 L437.4 220.9 L438.1 221.4 L438.8 221.9 L439.4 222.4 L440.0 222.9 L440.5 223.3 L441.0 223.8M385.5 189.7 L386.0 189.9 L386.6 190.1 L387.2 190.3 L387.8 190.5 L388.5 190.8 L389.1 191.0 L389.8 191.3 L390.5 191.6 L391.2 191.8 L391.9 192.1 L392.6 192.4 L393.3 192.7 L394.1 193.1 L394.8 193.4 L395.6 193.7 L396.3 194.0 L397.1 194.4 L397.9 194.7 L398.7 195.1 L399.5 195.5 L400.2 195.8 L401.0 196.2 L401.8 196.6 L402.6 197.0 L403.4 197.3 L404.2 197.7 L404.9 198.1 L405.7 198.5 L406.5 198.9 L407.2 199.3 L408.0 199.7 L408.7 200.1 L409.5 200.5 L410.2 200.9 L410.9 201.2 L411.6 201.6 L412.3 202.0 L413.0 202.4 L413.7 202.8 L414.3 203.1 L415.0 203.5 L415.6 203.9 L416.2 204.2 L416.8 204.6 L417.3 204.9 L417.9 205.3 L418.4 205.6 L418.9 205.9M256.5 442.2 L252.9 439.6 L249.3 436.9M255.3 441.1 L251.4 438.3 L247.6 435.4 L243.9 432.3 L240.3 429.2 L236.9 425.9M254.7 440.2 L250.7 437.3 L246.7 434.2 L243.0 431.0 L239.3 427.7 L235.7 424.3 L232.3 420.7 L229.0 417.0 L225.8 413.2 L222.8 409.3 L219.9 405.3 L217.2 401.1 L214.6 396.9 L212.1 392.7 L209.8 388.3 L207.7 383.8 L205.7 379.3 L203.9 374.7M254.8 439.7 L250.8 436.7 L246.9 433.5 L243.1 430.2 L239.5 426.8 L235.9 423.3 L232.5 419.6 L229.2 415.8 L226.1 411.9 L223.1 407.9 L220.2 403.8 L217.5 399.6 L214.9 395.3 L212.5 391.0 L210.2 386.5 L208.1 382.0 L206.1 377.4 L204.3 372.7 L202.7 368.0 L201.3 363.2 L200.0 358.4 L198.8 353.5 L197.9 348.6 L197.1 343.7 L196.5 338.8 L196.1 333.8 L195.8 328.8 L195.7 323.9 L195.8 318.9 L196.1 313.9 L196.5 309.0 L197.2 304.0 L197.9 299.1 L198.9 294.3 L200.0 289.4 L201.3 284.6 L202.8 279.9 L204.4 275.2 L206.2 270.6 L208.2 266.0 L210.3 261.5 L212.6 257.1 L215.0 252.8 L217.6 248.5 L220.4 244.4 L223.2 240.3 L226.3 236.4 L229.4 232.5 L232.7 228.8 L236.1 225.2 L239.7 221.7 L243.3 218.3 L247.1 215.1 L251.0 212.0M255.6 439.6 L251.7 436.5 L248.0 433.3 L244.4 430.0 L240.8 426.5 L237.5 422.9 L234.2 419.2 L231.0 415.4 L228.0 411.5 L225.2 407.5 L222.4 403.3 L219.9 399.1 L217.4 394.8 L215.1 390.4 L213.0 385.9 L211.0 381.4 L209.1 376.7 L207.5 372.0 L206.0 367.3 L204.6 362.5 L203.4 357.7 L202.4 352.8 L201.5 347.9 L200.8 342.9 L200.3 338.0 L200.0 333.0 L199.8 328.0 L199.8 323.0 L199.9 318.0 L200.3 313.0 L200.8 308.1 L201.4 303.1 L202.3 298.2 L203.3 293.3 L204.4 288.5 L205.8 283.7 L207.3 278.9 L208.9 274.2 L210.7 269.6 L212.7 265.0 L214.8 260.5 L217.1 256.1 L219.5 251.8 L222.1 247.6 L224.8 243.4 L227.7 239.4 L230.7 235.4 L233.8 231.6 L237.0 227.9 L240.4 224.3 L243.9 220.8 L247.5 217.5 L251.2 214.2 L255.1 211.2 L259.0 208.2 L263.0 205.4 L267.1 202.8 L271.4 200.3 L275.6 197.9 L280.0 195.7 L284.5 193.7 L289.0 191.8 L293.5 190.1 L298.2 188.5 L302.8 187.1 L307.6 185.9 L312.3 184.8 L317.1 184.0 L321.9 183.3 L326.8 182.7 L331.6 182.4 L336.5 182.2M257.0 439.7 L253.4 436.7 L250.0 433.5 L246.6 430.3 L243.4 426.8 L240.3 423.3 L237.3 419.6 L234.4 415.8 L231.7 411.9 L229.1 407.9 L226.6 403.8 L224.2 399.6 L222.0 395.3 L220.0 391.0 L218.1 386.5 L216.3 382.0 L214.7 377.4 L213.2 372.7 L211.9 368.0 L210.8 363.2 L209.8 358.4 L208.9 353.6 L208.2 348.7 L207.7 343.8 L207.3 338.8 L207.1 333.9 L207.1 328.9 L207.2 323.9 L207.5 318.9 L207.9 314.0 L208.5 309.0 L209.3 304.1 L210.2 299.2 L211.3 294.3 L212.5 289.5 L213.9 284.7 L215.5 279.9 L217.2 275.2 L219.0 270.6 L221.0 266.0 L223.1 261.5 L225.4 257.1 L227.8 252.8 L230.3 248.6 L233.0 244.4 L235.8 240.4 L238.8 236.4 L241.8 232.6 L245.0 228.8 L248.3 225.2 L251.7 221.8 L255.2 218.4 L258.8 215.2 L262.5 212.1 L266.3 209.1 L270.2 206.3 L274.2 203.6 L278.2 201.1 L282.3 198.7 L286.5 196.5 L290.8 194.4 L295.1 192.5 L299.5 190.8 L303.9 189.2 L308.4 187.8 L312.9 186.5 L317.4 185.5 L322.0 184.6 L326.6 183.8 L331.2 183.3 L335.8 182.9 L340.4 182.6 L345.0 182.6 L349.6 182.7 L354.2 183.0 L358.8 183.5 L363.3 184.2M259.0 440.3 L255.9 437.3 L252.8 434.3 L249.9 431.1 L247.0 427.7 L244.3 424.3 L241.7 420.7 L239.2 417.0 L236.8 413.2 L234.6 409.3 L232.5 405.3 L230.5 401.2 L228.6 397.0 L226.9 392.7 L225.3 388.3 L223.9 383.9 L222.6 379.4 L221.4 374.8 L220.4 370.1 L219.5 365.4 L218.8 360.7 L218.2 355.9 L217.8 351.1 L217.5 346.2 L217.4 341.3 L217.4 336.4 L217.5 331.5 L217.8 326.6 L218.3 321.6 L218.9 316.7 L219.6 311.8 L220.5 306.9 L221.6 302.0 L222.8 297.2 L224.1 292.3 L225.5 287.6 L227.2 282.8 L228.9 278.2 L230.8 273.5 L232.8 269.0 L234.9 264.5 L237.2 260.1 L239.6 255.7 L242.1 251.5 L244.7 247.3 L247.4 243.3 L250.3 239.3 L253.3 235.4 L256.3 231.7 L259.5 228.0 L262.8 224.5 L266.1 221.1 L269.6 217.8 L273.1 214.7 L276.7 211.7 L280.4 208.8 L284.2 206.1 L288.0 203.5 L291.9 201.1 L295.8 198.8 L299.8 196.7 L303.9 194.7 L308.0 192.9 L312.1 191.2 L316.3 189.8 L320.5 188.4 L324.7 187.3 L328.9 186.3 L333.2 185.5 L337.4 184.8 L341.7 184.3 L345.9 184.0 L350.2 183.9 L354.4 183.9 L358.6 184.1 L362.8 184.5 L367.0 185.1 L371.1 185.8 L375.2 186.7 L379.2 187.8M261.6 441.1 L259.0 438.3 L256.5 435.4 L254.0 432.4 L251.7 429.2 L249.4 425.9 L247.3 422.5 L245.3 419.0 L243.4 415.3 L241.6 411.6 L240.0 407.7 L238.4 403.7 L237.0 399.7 L235.7 395.5 L234.6 391.3 L233.5 387.0 L232.6 382.6 L231.8 378.1 L231.2 373.6 L230.7 369.0 L230.3 364.3 L230.0 359.7 L229.9 354.9 L229.9 350.2 L230.1 345.4 L230.3 340.5 L230.8 335.7 L231.3 330.8 L232.0 326.0 L232.8 321.1 L233.7 316.3 L234.8 311.4 L236.0 306.6 L237.3 301.8 L238.7 297.0 L240.3 292.3 L242.0 287.6 L243.8 282.9 L245.7 278.3 L247.7 273.8 L249.9 269.3 L252.1 264.8 L254.5 260.5 L257.0 256.2 L259.5 252.1 L262.2 248.0 L264.9 244.0 L267.8 240.1 L270.7 236.3 L273.7 232.6 L276.8 229.0 L280.0 225.5 L283.3 222.2 L286.6 219.0 L289.9 215.9 L293.4 213.0 L296.9 210.2 L300.4 207.5 L304.0 205.0 L307.6 202.6 L311.3 200.3 L315.0 198.3 L318.8 196.3 L322.5 194.6 L326.3 192.9 L330.1 191.5 L333.9 190.2 L337.7 189.1 L341.5 188.1 L345.4 187.3 L349.2 186.7 L353.0 186.3 L356.7 186.0 L360.5 185.9 L364.2 185.9 L367.9 186.2 L371.6 186.6 L375.2 187.1 L378.8 187.8 L382.3 188.7 L385.8 189.8M264.7 442.2 L262.7 439.7 L260.7 437.0 L258.9 434.2 L257.1 431.2 L255.5 428.1 L253.9 424.9 L252.5 421.6 L251.2 418.2 L249.9 414.6 L248.8 410.9 L247.8 407.2 L246.9 403.3 L246.1 399.3 L245.4 395.3 L244.9 391.1 L244.4 386.9 L244.1 382.6 L243.9 378.2 L243.8 373.8 L243.8 369.3 L244.0 364.8 L244.2 360.2 L244.6 355.5 L245.1 350.9 L245.7 346.1 L246.4 341.4 L247.2 336.7 L248.1 331.9 L249.2 327.1 L250.3 322.4 L251.6 317.6 L253.0 312.8 L254.5 308.1 L256.0 303.3 L257.7 298.6 L259.5 294.0 L261.4 289.3 L263.4 284.8 L265.4 280.2 L267.6 275.7 L269.8 271.3 L272.2 267.0 L274.6 262.7 L277.1 258.5 L279.6 254.3 L282.3 250.3 L285.0 246.3 L287.7 242.5 L290.6 238.7 L293.5 235.1 L296.4 231.6 L299.4 228.1 L302.5 224.8 L305.6 221.6 L308.7 218.6 L311.9 215.6 L315.1 212.9 L318.3 210.2 L321.6 207.7 L324.9 205.3 L328.2 203.1 L331.5 201.0 L334.8 199.1 L338.1 197.3 L341.5 195.7 L344.8 194.2 L348.1 192.9 L351.4 191.8 L354.7 190.8 L358.0 190.0 L361.3 189.3 L364.5 188.8 L367.7 188.5 L370.9 188.4 L374.0 188.4 L377.1 188.6 L380.1 188.9 L383.1 189.4 L386.0 190.1 L388.9 190.9M268.2 443.6 L266.8 441.3 L265.5 438.9 L264.4 436.4 L263.3 433.7 L262.3 430.9 L261.4 427.9 L260.6 424.8 L259.9 421.7 L259.3 418.3 L258.8 414.9 L258.3 411.4 L258.0 407.7 L257.8 404.0 L257.7 400.2 L257.7 396.2 L257.7 392.2 L257.9 388.1 L258.2 384.0 L258.6 379.7 L259.0 375.4 L259.6 371.0 L260.3 366.6 L261.1 362.1 L261.9 357.6 L262.9 353.1 L263.9 348.5 L265.1 343.8 L266.3 339.2 L267.6 334.5 L269.0 329.9 L270.5 325.2 L272.1 320.5 L273.7 315.8 L275.5 311.2 L277.3 306.5 L279.2 301.9 L281.1 297.3 L283.2 292.7 L285.3 288.2 L287.4 283.7 L289.7 279.3 L292.0 274.9 L294.3 270.6 L296.7 266.4 L299.2 262.2 L301.7 258.1 L304.2 254.1 L306.8 250.2 L309.5 246.3 L312.1 242.6 L314.8 238.9 L317.6 235.4 L320.3 232.0 L323.1 228.7 L325.9 225.5 L328.7 222.4 L331.6 219.5 L334.4 216.6 L337.2 214.0 L340.1 211.4 L342.9 209.0 L345.8 206.7 L348.6 204.6 L351.4 202.6 L354.2 200.8 L357.0 199.1 L359.8 197.6 L362.5 196.2 L365.3 195.0 L367.9 194.0 L370.6 193.1 L373.2 192.3 L375.8 191.8 L378.3 191.3 L380.8 191.1 L383.2 191.0 L385.6 191.1 L387.9 191.3 L390.1 191.7 L392.3 192.3M271.9 445.2 L271.3 443.2 L270.7 441.1 L270.3 438.9 L269.9 436.5 L269.6 434.0 L269.4 431.4 L269.3 428.6 L269.3 425.7 L269.3 422.7 L269.5 419.5 L269.7 416.3 L270.0 412.9 L270.4 409.4 L270.9 405.9 L271.4 402.2 L272.1 398.4 L272.8 394.6 L273.6 390.6 L274.5 386.6 L275.5 382.5 L276.5 378.3 L277.6 374.1 L278.8 369.8 L280.1 365.5 L281.4 361.1 L282.8 356.6 L284.3 352.1 L285.9 347.6 L287.5 343.1 L289.2 338.5 L290.9 334.0 L292.7 329.4 L294.5 324.8 L296.4 320.2 L298.4 315.6 L300.4 311.0 L302.5 306.5 L304.6 301.9 L306.7 297.4 L308.9 293.0 L311.1 288.5 L313.4 284.1 L315.6 279.8 L318.0 275.5 L320.3 271.3 L322.7 267.1 L325.0 263.1 L327.4 259.0 L329.9 255.1 L332.3 251.3 L334.7 247.5 L337.2 243.9 L339.6 240.3 L342.0 236.8 L344.5 233.5 L346.9 230.2 L349.3 227.1 L351.7 224.1 L354.1 221.2 L356.5 218.5 L358.9 215.9 L361.2 213.4 L363.5 211.0 L365.8 208.8 L368.0 206.7 L370.2 204.8 L372.4 203.0 L374.5 201.4 L376.6 199.9 L378.7 198.6 L380.7 197.4 L382.6 196.4 L384.5 195.5 L386.3 194.8 L388.1 194.3 L389.8 193.9 L391.5 193.6 L393.1 193.6 L394.6 193.7 L396.1 193.9M275.8 447.0 L275.9 445.4 L276.1 443.6 L276.4 441.7 L276.8 439.7 L277.3 437.5 L277.8 435.2 L278.4 432.8 L279.1 430.2 L279.8 427.5 L280.7 424.6 L281.5 421.7 L282.5 418.6 L283.5 415.4 L284.6 412.2 L285.8 408.8 L287.1 405.3 L288.3 401.7 L289.7 398.0 L291.1 394.2 L292.6 390.3 L294.1 386.4 L295.7 382.4 L297.4 378.3 L299.1 374.1 L300.8 369.9 L302.6 365.6 L304.4 361.3 L306.3 357.0 L308.2 352.6 L310.2 348.1 L312.2 343.7 L314.2 339.2 L316.2 334.7 L318.3 330.2 L320.4 325.7 L322.6 321.1 L324.7 316.6 L326.9 312.1 L329.1 307.6 L331.3 303.2 L333.5 298.7 L335.7 294.3 L337.9 290.0 L340.1 285.6 L342.3 281.4 L344.5 277.1 L346.7 273.0 L348.9 268.9 L351.1 264.8 L353.3 260.9 L355.5 257.0 L357.6 253.2 L359.7 249.5 L361.8 245.9 L363.9 242.3 L365.9 238.9 L367.9 235.6 L369.8 232.4 L371.8 229.3 L373.7 226.3 L375.5 223.5 L377.3 220.7 L379.0 218.1 L380.8 215.6 L382.4 213.3 L384.0 211.1 L385.6 209.0 L387.0 207.1 L388.5 205.3 L389.9 203.7 L391.2 202.2 L392.4 200.9 L393.6 199.7 L394.7 198.6 L395.8 197.8 L396.7 197.0 L397.6 196.5 L398.5 196.0 L399.3 195.8 L399.9 195.7M279.7 448.9 L280.6 447.6 L281.6 446.3 L282.7 444.7 L283.8 443.1 L285.0 441.2 L286.3 439.3 L287.6 437.2 L289.0 435.0 L290.4 432.6 L292.0 430.1 L293.5 427.5 L295.2 424.7 L296.8 421.8 L298.6 418.9 L300.4 415.7 L302.2 412.5 L304.1 409.2 L306.0 405.8 L307.9 402.3 L309.9 398.7 L312.0 395.0 L314.0 391.2 L316.1 387.3 L318.2 383.3 L320.4 379.3 L322.6 375.2 L324.7 371.1 L327.0 366.9 L329.2 362.7 L331.4 358.4 L333.7 354.0 L335.9 349.7 L338.2 345.3 L340.4 340.8 L342.7 336.4 L344.9 331.9 L347.2 327.5 L349.4 323.0 L351.7 318.5 L353.9 314.1 L356.1 309.6 L358.2 305.2 L360.4 300.8 L362.5 296.4 L364.6 292.1 L366.7 287.8 L368.7 283.5 L370.7 279.3 L372.6 275.2 L374.5 271.1 L376.4 267.1 L378.2 263.1 L380.0 259.3 L381.8 255.5 L383.4 251.8 L385.1 248.1 L386.6 244.6 L388.1 241.2 L389.6 237.9 L391.0 234.6 L392.3 231.5 L393.6 228.6 L394.8 225.7 L395.9 222.9 L396.9 220.3 L397.9 217.8 L398.8 215.4 L399.7 213.2 L400.5 211.1 L401.2 209.1 L401.8 207.3 L402.3 205.6 L402.8 204.1 L403.2 202.7 L403.5 201.5 L403.7 200.4 L403.9 199.5 L404.0 198.7 L404.0 198.1 L403.9 197.6M283.6 450.8 L285.2 450.0 L287.0 449.0 L288.8 447.8 L290.7 446.5 L292.6 445.1 L294.6 443.5 L296.6 441.7 L298.7 439.9 L300.9 437.9 L303.0 435.7 L305.3 433.4 L307.6 431.0 L309.9 428.4 L312.2 425.8 L314.6 423.0 L317.0 420.0 L319.4 417.0 L321.9 413.9 L324.4 410.6 L326.9 407.3 L329.4 403.8 L331.9 400.2 L334.5 396.6 L337.0 392.9 L339.6 389.0 L342.1 385.2 L344.7 381.2 L347.2 377.2 L349.7 373.1 L352.2 368.9 L354.7 364.7 L357.2 360.4 L359.7 356.1 L362.1 351.8 L364.5 347.4 L366.9 343.0 L369.2 338.6 L371.5 334.2 L373.8 329.7 L376.0 325.3 L378.2 320.8 L380.3 316.4 L382.4 311.9 L384.4 307.5 L386.4 303.1 L388.3 298.8 L390.2 294.4 L392.0 290.1 L393.7 285.8 L395.4 281.6 L397.0 277.5 L398.5 273.4 L399.9 269.3 L401.3 265.4 L402.6 261.5 L403.8 257.7 L405.0 253.9 L406.1 250.3 L407.0 246.7 L407.9 243.2 L408.8 239.9 L409.5 236.6 L410.2 233.5 L410.7 230.4 L411.2 227.5 L411.6 224.7 L411.9 222.0 L412.1 219.5 L412.2 217.0 L412.2 214.7 L412.2 212.6 L412.0 210.5 L411.8 208.7 L411.5 206.9 L411.1 205.3 L410.6 203.9 L410.0 202.6 L409.3 201.4 L408.6 200.4 L407.7 199.5M287.2 452.8 L289.6 452.3 L292.1 451.7 L294.6 450.9 L297.2 450.0 L299.8 448.9 L302.5 447.7 L305.2 446.3 L307.9 444.8 L310.7 443.1 L313.6 441.3 L316.4 439.4 L319.3 437.3 L322.2 435.0 L325.2 432.7 L328.1 430.2 L331.1 427.5 L334.1 424.8 L337.1 421.9 L340.0 418.9 L343.0 415.8 L346.0 412.6 L349.0 409.3 L351.9 405.9 L354.9 402.4 L357.8 398.8 L360.7 395.1 L363.6 391.3 L366.4 387.4 L369.2 383.5 L372.0 379.4 L374.8 375.4 L377.5 371.2 L380.1 367.0 L382.7 362.8 L385.3 358.5 L387.7 354.1 L390.2 349.8 L392.5 345.4 L394.8 340.9 L397.1 336.5 L399.2 332.0 L401.3 327.6 L403.4 323.1 L405.3 318.6 L407.1 314.2 L408.9 309.7 L410.6 305.3 L412.2 300.9 L413.7 296.5 L415.2 292.2 L416.5 287.9 L417.7 283.6 L418.9 279.4 L419.9 275.3 L420.9 271.2 L421.7 267.2 L422.4 263.2 L423.1 259.3 L423.6 255.5 L424.1 251.8 L424.4 248.2 L424.6 244.7 L424.8 241.3 L424.8 237.9 L424.7 234.7 L424.5 231.6 L424.2 228.6 L423.9 225.7 L423.4 223.0 L422.8 220.3 L422.1 217.8 L421.3 215.5 L420.4 213.2 L419.4 211.1 L418.3 209.1 L417.1 207.3 L415.8 205.6 L414.4 204.1 L412.9 202.7 L411.4 201.5M290.6 454.6 L293.6 454.6 L296.7 454.3 L299.9 453.9 L303.1 453.3 L306.4 452.6 L309.7 451.8 L313.0 450.7 L316.4 449.6 L319.8 448.2 L323.2 446.7 L326.7 445.1 L330.1 443.3 L333.6 441.4 L337.0 439.4 L340.5 437.2 L344.0 434.8 L347.5 432.4 L350.9 429.8 L354.4 427.0 L357.8 424.2 L361.2 421.2 L364.6 418.1 L367.9 414.9 L371.2 411.6 L374.5 408.2 L377.7 404.7 L380.9 401.0 L384.1 397.3 L387.1 393.5 L390.2 389.7 L393.1 385.7 L396.0 381.7 L398.8 377.6 L401.6 373.4 L404.2 369.2 L406.8 364.9 L409.4 360.6 L411.8 356.2 L414.1 351.8 L416.4 347.4 L418.5 342.9 L420.6 338.4 L422.5 333.9 L424.4 329.4 L426.1 324.9 L427.8 320.4 L429.3 315.8 L430.8 311.3 L432.1 306.9 L433.3 302.4 L434.4 298.0 L435.3 293.6 L436.2 289.2 L436.9 284.9 L437.6 280.6 L438.1 276.4 L438.4 272.2 L438.7 268.1 L438.8 264.1 L438.8 260.2 L438.7 256.3 L438.5 252.5 L438.2 248.8 L437.7 245.2 L437.1 241.7 L436.4 238.3 L435.6 235.0 L434.6 231.8 L433.6 228.7 L432.4 225.8 L431.1 222.9 L429.7 220.2 L428.2 217.6 L426.6 215.2 L424.9 212.9 L423.0 210.7 L421.1 208.6 L419.1 206.7 L417.0 205.0 L414.7 203.4M293.5 456.4 L297.1 456.7 L300.8 456.8 L304.6 456.7 L308.4 456.5 L312.2 456.1 L316.0 455.6 L319.9 454.9 L323.8 454.0 L327.7 453.0 L331.7 451.8 L335.6 450.5 L339.6 449.0 L343.5 447.4 L347.5 445.6 L351.4 443.7 L355.3 441.6 L359.2 439.4 L363.1 437.1 L367.0 434.6 L370.8 432.0 L374.6 429.2 L378.3 426.4 L382.0 423.4 L385.6 420.2 L389.2 417.0 L392.7 413.7 L396.2 410.2 L399.5 406.7 L402.8 403.0 L406.1 399.2 L409.2 395.4 L412.3 391.5 L415.3 387.5 L418.2 383.4 L420.9 379.2 L423.6 375.0 L426.2 370.7 L428.7 366.4 L431.1 362.0 L433.3 357.6 L435.5 353.1 L437.5 348.6 L439.4 344.1 L441.2 339.5 L442.8 334.9 L444.4 330.3 L445.8 325.7 L447.0 321.1 L448.2 316.6 L449.2 312.0 L450.1 307.4 L450.8 302.9 L451.4 298.4 L451.9 293.9 L452.2 289.4 L452.4 285.0 L452.5 280.7 L452.4 276.4 L452.2 272.1 L451.8 268.0 L451.3 263.9 L450.7 259.8 L449.9 255.9 L449.0 252.0 L448.0 248.3 L446.8 244.6 L445.5 241.0 L444.1 237.5 L442.6 234.1 L440.9 230.9 L439.1 227.7 L437.1 224.7 L435.1 221.8 L432.9 219.0 L430.7 216.4 L428.3 213.8 L425.8 211.5 L423.2 209.2 L420.5 207.1 L417.7 205.1M295.9 458.0 L300.1 458.6 L304.2 459.0 L308.5 459.3 L312.7 459.3 L317.0 459.3 L321.3 459.0 L325.6 458.6 L330.0 458.1 L334.4 457.3 L338.7 456.4 L343.1 455.4 L347.5 454.2 L351.8 452.8 L356.2 451.3 L360.5 449.6 L364.8 447.8 L369.0 445.8 L373.3 443.7 L377.4 441.4 L381.6 439.0 L385.7 436.5 L389.7 433.8 L393.7 431.0 L397.6 428.1 L401.4 425.0 L405.1 421.8 L408.8 418.5 L412.4 415.1 L415.9 411.5 L419.3 407.9 L422.6 404.2 L425.8 400.3 L428.9 396.4 L431.9 392.4 L434.8 388.3 L437.6 384.1 L440.2 379.9 L442.7 375.6 L445.1 371.2 L447.4 366.8 L449.5 362.3 L451.5 357.8 L453.4 353.2 L455.1 348.6 L456.7 344.0 L458.1 339.3 L459.4 334.7 L460.6 330.0 L461.6 325.3 L462.4 320.6 L463.1 316.0 L463.7 311.3 L464.1 306.6 L464.3 302.0 L464.4 297.4 L464.4 292.8 L464.2 288.3 L463.8 283.8 L463.3 279.4 L462.6 275.0 L461.8 270.7 L460.8 266.5 L459.7 262.3 L458.5 258.2 L457.1 254.2 L455.5 250.2 L453.8 246.4 L452.0 242.7 L450.0 239.0 L447.9 235.5 L445.7 232.1 L443.3 228.7 L440.8 225.5 L438.2 222.5 L435.5 219.5 L432.6 216.7 L429.7 214.0 L426.6 211.4 L423.4 209.0M297.8 459.4 L302.3 460.2 L306.9 460.9 L311.4 461.4 L316.1 461.8 L320.7 462.0 L325.4 462.0 L330.0 461.9 L334.7 461.5 L339.4 461.1 L344.1 460.4 L348.8 459.6 L353.5 458.6 L358.2 457.5 L362.8 456.2 L367.4 454.7 L372.0 453.1 L376.5 451.4 L381.0 449.4 L385.5 447.4 L389.8 445.1 L394.2 442.8 L398.4 440.2 L402.6 437.6 L406.7 434.8 L410.7 431.9 L414.7 428.8 L418.5 425.6 L422.3 422.3 L425.9 418.9 L429.5 415.4 L432.9 411.7 L436.2 408.0 L439.4 404.1 L442.5 400.2 L445.4 396.1 L448.3 392.0 L451.0 387.8 L453.5 383.5 L455.9 379.1 L458.2 374.7 L460.3 370.2 L462.3 365.7 L464.1 361.1 L465.8 356.5 L467.3 351.8 L468.7 347.1 L469.9 342.4 L471.0 337.6 L471.9 332.9 L472.6 328.1 L473.2 323.3 L473.6 318.5 L473.8 313.8 L473.9 309.0 L473.8 304.3 L473.5 299.6 L473.1 294.9 L472.5 290.3 L471.8 285.7 L470.9 281.1 L469.8 276.6 L468.6 272.2 L467.2 267.8 L465.7 263.5 L464.0 259.3 L462.2 255.1 L460.2 251.1 L458.0 247.1 L455.8 243.2 L453.3 239.5 L450.8 235.8 L448.1 232.2 L445.2 228.8 L442.3 225.4 L439.2 222.2 L436.0 219.1 L432.6 216.2M299.1 460.5 L303.8 461.6 L308.6 462.5 L313.4 463.2 L318.3 463.8 L323.2 464.2 L328.0 464.4 L333.0 464.5 L337.9 464.4 L342.8 464.1 L347.7 463.6 L352.6 463.0 L357.5 462.2 L362.4 461.3 L367.2 460.2 L372.0 458.9 L376.8 457.4 L381.5 455.8 L386.2 454.1 L390.8 452.1 L395.4 450.1 L399.8 447.8 L404.2 445.5 L408.6 442.9 L412.8 440.3 L417.0 437.4 L421.0 434.5 L425.0 431.4 L428.8 428.2 L432.6 424.9 L436.2 421.4 L439.7 417.8 L443.1 414.2 L446.4 410.4 L449.5 406.5 L452.5 402.5 L455.4 398.4 L458.1 394.2 L460.7 389.9 L463.1 385.6 L465.4 381.2 L467.5 376.7 L469.5 372.1 L471.3 367.5 L472.9 362.9 L474.4 358.2 L475.7 353.4 L476.9 348.6 L477.9 343.8 L478.7 339.0 L479.3 334.2 L479.8 329.3 L480.1 324.4 L480.3 319.6 L480.2 314.7 L480.0 309.9 L479.6 305.0 L479.1 300.2 L478.4 295.5 L477.5 290.7 L476.4 286.1 L475.2 281.4 L473.8 276.8 L472.2 272.3 L470.5 267.8 L468.6 263.4 L466.6 259.1 L464.4 254.9 L462.1 250.7 L459.6 246.6 L456.9 242.7 L454.1 238.8 L451.2 235.0 L448.2 231.4 L445.0 227.8M299.7 461.3 L304.5 462.6 L309.4 463.6 L314.3 464.5 L319.3 465.3 L324.3 465.8 L329.3 466.2 L334.3 466.4 L339.4 466.4 L344.4 466.3 L349.4 466.0 L354.4 465.5 L359.4 464.9 L364.4 464.1 L369.3 463.1 L374.2 461.9 L379.0 460.6 L383.9 459.1 L388.6 457.5 L393.3 455.7 L397.9 453.7 L402.5 451.6 L407.0 449.3 L411.4 446.9 L415.7 444.3 L419.9 441.6 L424.0 438.7 L428.0 435.7 L431.9 432.5 L435.7 429.3 L439.4 425.9 L442.9 422.4 L446.4 418.7 L449.6 415.0 L452.8 411.1 L455.8 407.1 L458.7 403.1 L461.4 398.9 L464.0 394.7 L466.5 390.3 L468.7 385.9 L470.9 381.4 L472.8 376.9 L474.6 372.2 L476.3 367.6 L477.7 362.8 L479.0 358.1 L480.2 353.2 L481.1 348.4 L481.9 343.5 L482.5 338.6 L482.9 333.7 L483.2 328.8 L483.3 323.8 L483.2 318.9 L482.9 314.0 L482.5 309.1 L481.9 304.2 L481.1 299.3 L480.1 294.5 L479.0 289.7 L477.7 284.9 L476.2 280.2M299.5 461.8 L304.4 463.2 L309.3 464.3 L314.2 465.3 L319.1 466.1 L324.1 466.8 L329.1 467.3 L334.1 467.6 L339.1 467.7 L344.1 467.7 L349.1 467.5 L354.1 467.1 L359.1 466.5 L364.0 465.8 L368.9 464.9 L373.8 463.8 L378.7 462.5 L383.5 461.1 L388.2 459.6 L392.9 457.8 L397.5 455.9 L402.0 453.8 L406.5 451.6 L410.9 449.3 L415.2 446.7 L419.4 444.1 L423.5 441.2M298.8 462.0 L303.5 463.4 L308.2 464.6 L312.9 465.6 L317.7 466.4 L322.6 467.1 L327.4 467.6 L332.3 468.0 L337.1 468.1M297.3 461.8 L301.7 463.2 L306.2 464.3 L310.7 465.3M276.2 451.2 V455.2" fill="none" stroke="#111" stroke-width="1.10"/>
<path d="M209.7 262.2 L210.0 261.8 L210.5 261.4 L211.2 261.0 L212.0 260.8 L212.9 260.6 L214.0 260.6 L215.3 260.6 L216.7 260.6 L218.3 260.8 L220.0 261.0 L221.9 261.3 L223.9 261.7 L226.0 262.2 L228.3 262.7 L230.7 263.3 L233.2 264.0 L235.9 264.8 L238.7 265.6 L241.6 266.5 L244.7 267.5 L247.8 268.6 L251.1 269.7 L254.5 270.9 L258.0 272.1 L261.5 273.5 L265.2 274.8 L269.0 276.3 L272.8 277.8 L276.8 279.4 L280.8 281.0 L284.8 282.6 L289.0 284.4 L293.2 286.1 L297.5 288.0 L301.8 289.8 L306.1 291.7 L310.5 293.7 L315.0 295.7 L319.4 297.7 L323.9 299.8 L328.4 301.8 L332.9 304.0 L337.5 306.1 L342.0 308.3 L346.5 310.5 L351.0 312.7 L355.5 314.9 L360.0 317.1 L364.5 319.4 L368.9 321.6 L373.3 323.9 L377.6 326.1 L381.9 328.4 L386.2 330.6 L390.4 332.9 L394.5 335.1 L398.6 337.3 L402.6 339.5 L406.5 341.7 L410.3 343.9 L414.1 346.0 L417.7 348.1 L421.3 350.2 L424.7 352.3 L428.1 354.3 L431.3 356.3 L434.5 358.3 L437.5 360.2 L440.4 362.1 L443.2 363.9 L445.8 365.7 L448.3 367.4 L450.7 369.1 L453.0 370.7 L455.1 372.3 L457.0 373.8 L458.9 375.3 L460.5 376.6 L462.1 378.0 L463.5 379.2 L464.7 380.4 L465.8 381.6 L466.7 382.6 L467.5 383.6 L468.1 384.6 L468.5 385.4 L468.8 386.2 L469.0 386.9 L469.0 387.5 L468.8 388.1" fill="none" stroke="#000" stroke-width="2.80"/>
<path d="M278.4 448.2 L279.1 446.9 L279.8 445.4 L280.6 443.7 L281.5 441.9 L282.5 440.0 L283.5 437.9 L284.6 435.7 L285.8 433.4 L287.0 430.9 L288.3 428.3 L289.6 425.6 L291.0 422.7 L292.5 419.7 L294.0 416.6 L295.6 413.4 L297.3 410.1 L298.9 406.7 L300.7 403.2 L302.5 399.6 L304.3 395.9 L306.2 392.1 L308.1 388.2 L310.0 384.3 L312.0 380.3 L314.0 376.2 L316.1 372.1 L318.1 367.9 L320.2 363.6 L322.4 359.3 L324.5 355.0 L326.7 350.6 L328.9 346.2 L331.0 341.8 L333.2 337.3 L335.5 332.8 L337.7 328.4 L339.9 323.9 L342.1 319.4 L344.3 314.9 L346.5 310.5 L348.7 306.0 L350.9 301.6 L353.1 297.2 L355.2 292.8 L357.3 288.5 L359.5 284.3 L361.5 280.0 L363.6 275.9 L365.6 271.8 L367.6 267.7 L369.6 263.7 L371.5 259.8 L373.4 256.0 L375.3 252.3 L377.1 248.6 L378.8 245.1 L380.5 241.6 L382.2 238.3 L383.8 235.0 L385.3 231.9 L386.8 228.9 L388.3 226.0 L389.6 223.2 L391.0 220.5 L392.2 218.0 L393.4 215.6 L394.5 213.3 L395.6 211.2 L396.6 209.2 L397.5 207.3 L398.3 205.6 L399.1 204.0 L399.8 202.6 L400.4 201.4 L401.0 200.2 L401.5 199.3 L401.9 198.5 L402.2 197.8 L402.4 197.3 L402.6 197.0" fill="none" stroke="#222" stroke-width="1.10" stroke-dasharray="4 4"/>
<ellipse cx="339.25" cy="325.15" rx="143.75" ry="142.50" fill="none" stroke="#c0c0c0" stroke-width="1" opacity="0.75"/>
</g></svg>
<div class="a" style="left:588px;top:181px;width:12px;height:288px;transform-origin:0 0;transform:translate(0.80px,0.30px) scale(1.0167,1.0014);background:#efefef"></div>
<div class="a" style="left:90px;top:469px;width:499px;height:11px;transform-origin:0 0;transform:translate(0.00px,0.70px) scale(0.9996,1.0000);background:#efefef"></div>
<div class="a" style="left:588px;top:469px;width:12px;height:11px;transform-origin:0 0;transform:translate(0.80px,0.70px) scale(1.0167,1.0000);background:#f7f7f7"></div>
<div class="a" style="left:603px;top:147px;width:1px;height:333px;transform-origin:0 0;transform:translate(0.70px,0.00px) scale(0.9000,1.0000);background:#dcdcdc"></div>
<div class="a" style="left:604px;top:147px;width:2px;height:333px;transform-origin:0 0;transform:translate(0.60px,0.00px) scale(1.0000,1.0000);background:#f4f4f4"></div>
<div class="a" style="left:593px;top:318px;width:2px;height:14px;transform-origin:0 0;transform:translate(0.80px,0.80px) scale(1.2000,1.0000);background:#8c8c8c;border-radius:1.2px"></div>
<div class="a" style="left:327px;top:474px;width:22px;height:2px;transform-origin:0 0;transform:translate(0.80px,0.90px) scale(1.0000,1.0500);background:#8c8c8c;border-radius:1px"></div>
<div class="a" style="left:9px;top:150px;width:22px;height:22px;transform-origin:0 0;transform:translate(0.00px,0.60px) scale(1.0182,1.0182);background:#fdfdfd;border:1px solid #d3d3d3;border-bottom-color:#c2c2c2;border-radius:3.5px;box-shadow:0 0 1.2px rgba(0,0,0,0.16);box-shadow:0 0.6px 0.5px #d9d9d9"></div>
<div class="a" style="left:35px;top:150px;width:22px;height:22px;transform-origin:0 0;transform:translate(0.60px,0.60px) scale(1.0182,1.0182);background:#fdfdfd;border:1px solid #d3d3d3;border-bottom-color:#c2c2c2;border-radius:3.5px;box-shadow:0 0 1.2px rgba(0,0,0,0.16);box-shadow:0 0.6px 0.5px #d9d9d9"></div>
<div class="a" style="left:9px;top:177px;width:22px;height:22px;transform-origin:0 0;transform:translate(0.00px,0.80px) scale(1.0182,1.0182);background:#fdfdfd;border:1px solid #d3d3d3;border-bottom-color:#c2c2c2;border-radius:3.5px;box-shadow:0 0 1.2px rgba(0,0,0,0.16);box-shadow:0 0.6px 0.5px #d9d9d9"></div>
<div class="a" style="left:9px;top:204px;width:22px;height:22px;transform-origin:0 0;transform:translate(0.00px,0.50px) scale(1.0182,1.0182);background:#fdfdfd;border:1px solid #d3d3d3;border-bottom-color:#c2c2c2;border-radius:3.5px;box-shadow:0 0 1.2px rgba(0,0,0,0.16);box-shadow:0 0.6px 0.5px #d9d9d9"></div>
<div class="a" style="left:9px;top:231px;width:22px;height:22px;transform-origin:0 0;transform:translate(0.00px,0.30px) scale(1.0182,1.0182);background:#fdfdfd;border:1px solid #d3d3d3;border-bottom-color:#c2c2c2;border-radius:3.5px;box-shadow:0 0 1.2px rgba(0,0,0,0.16);box-shadow:0 0.6px 0.5px #d9d9d9"></div>
<div class="a" style="left:9px;top:258px;width:22px;height:22px;transform-origin:0 0;transform:translate(0.00px,0.10px) scale(1.0182,1.0182);background:#fdfdfd;border:1px solid #d3d3d3;border-bottom-color:#c2c2c2;border-radius:3.5px;box-shadow:0 0 1.2px rgba(0,0,0,0.16);box-shadow:0 0.6px 0.5px #d9d9d9"></div>
<svg class="a" style="left:9px;top:150px" width="50" height="131" viewBox="0 0 50 131"><defs><linearGradient id="bl" x1="0" y1="0" x2="0" y2="1"><stop offset="0" stop-color="#d6e9fc"/><stop offset="0.45" stop-color="#9cc6f4"/><stop offset="1" stop-color="#5b9be3"/></linearGradient></defs><rect x="6.9" y="8.2" width="9.3" height="1.7" fill="#2f62dd"/><path d="M11.55 10.6 L15.9 15.7 H7.2 Z" fill="#7fa8f2" stroke="#2f62dd" stroke-width="0.9" stroke-linejoin="round"/><circle cx="38.4" cy="12.5" r="5.1" fill="#fffdf0" stroke="#d6a90e" stroke-width="2.9"/><circle cx="38.4" cy="12.5" r="2.4" fill="#d9ae3e"/><circle cx="11.5" cy="39.1" r="5.8" fill="url(#bl)" stroke="#47555f" stroke-width="1.4"/><path d="M8.3 39.1 H14.7 M11.5 35.9 V42.3" stroke="#141c46" stroke-width="1.5"/><circle cx="11.5" cy="65.9" r="5.8" fill="url(#bl)" stroke="#47555f" stroke-width="1.4"/><circle cx="11.5" cy="92.6" r="5.8" fill="url(#bl)" stroke="#47555f" stroke-width="1.4"/><path d="M8.3 92.6 H14.7" stroke="#141c46" stroke-width="1.6"/><path d="M7.2 116.3 H15.9 L11.55 120.6 Z" fill="#7fa8f2" stroke="#2f62dd" stroke-width="0.9" stroke-linejoin="round"/><rect x="6.9" y="121.4" width="9.3" height="1.7" fill="#2f62dd"/></svg>
<svg class="a" style="left:7.6px;top:296.1px" width="11" height="11" viewBox="0 0 11 11"><rect x="0.2" y="0.2" width="10.3" height="10.5" rx="2" fill="#0f5ec3"/><path d="M2.7 5.5 L4.6 7.4 L8.1 3.5" fill="none" stroke="#c3d8f2" stroke-width="1.1"/></svg>
<svg class="a" style="left:7.6px;top:311.2px" width="11" height="11" viewBox="0 0 11 11"><rect x="0.2" y="0.2" width="10.3" height="10.5" rx="2" fill="#0f5ec3"/><path d="M2.7 5.5 L4.6 7.4 L8.1 3.5" fill="none" stroke="#c3d8f2" stroke-width="1.1"/></svg>
<svg class="a" style="left:7.6px;top:326.1px" width="11" height="11" viewBox="0 0 11 11"><rect x="0.2" y="0.2" width="10.3" height="10.5" rx="2" fill="#0f5ec3"/><path d="M2.7 5.5 L4.6 7.4 L8.1 3.5" fill="none" stroke="#c3d8f2" stroke-width="1.1"/></svg>
<svg class="a" style="left:7.6px;top:358.9px" width="11" height="11" viewBox="0 0 11 11"><rect x="0.8" y="0.8" width="9.2" height="9.3" rx="1.6" fill="#f4f4f4" stroke="#626262" stroke-width="1"/></svg>
<div class="t" style="left:19.60px;top:296.75px;font-size:10.4px;color:#000;transform:scaleX(0.9942)"><u>N</u>amen</div>
<div class="t" style="left:19.81px;top:311.75px;font-size:10.4px;color:#000;transform:scaleX(0.9267)">Z<u>M</u> + Äquator</div>
<div class="t" style="left:20.11px;top:326.75px;font-size:10.4px;color:#000;transform:scaleX(0.9382)"><u>G</u>radnetz</div>
<div class="t" style="left:20.21px;top:358.75px;font-size:10.4px;color:#000;transform:scaleX(0.9531)"><u>T</u>exturierung</div>
<div class="a" style="left:8px;top:421px;width:78px;height:56px;transform-origin:0 0;transform:translate(0.00px,0.70px) scale(0.9974,0.9964);border:1px solid #dcdcdc"></div>
<div class="a" style="left:12px;top:418px;width:54px;height:8px;transform-origin:0 0;transform:translate(0.50px,0.00px) scale(0.9907,1.0000);background:#f9f9f9"></div>
<div class="t" style="left:14.01px;top:416.75px;font-size:10.4px;color:#000;transform:scaleX(0.9295)">Ausrichtung</div>
<svg class="a" style="left:13.5px;top:431.6px" width="12" height="12" viewBox="0 0 12 12"><circle cx="5.65" cy="5.4" r="4.75" fill="#f1f1f1" stroke="#6e6e6e" stroke-width="1.15"/></svg>
<svg class="a" style="left:13.5px;top:446.6px" width="12" height="12" viewBox="0 0 12 12"><circle cx="5.65" cy="5.4" r="5.3" fill="#0b5cc2"/><circle cx="5.65" cy="5.4" r="1.8" fill="#fff"/></svg>
<svg class="a" style="left:13.5px;top:461.5px" width="12" height="12" viewBox="0 0 12 12"><circle cx="5.65" cy="5.4" r="4.75" fill="#f1f1f1" stroke="#6e6e6e" stroke-width="1.15"/></svg>
<div class="t" style="left:26.31px;top:431.75px;font-size:10.4px;color:#000;transform:scaleX(0.9586)">Planetar</div>
<div class="t" style="left:26.81px;top:446.75px;font-size:10.4px;color:#000;transform:scaleX(0.9319)">Äquatorial</div>
<div class="t" style="left:26.31px;top:461.75px;font-size:10.4px;color:#000;transform:scaleX(0.9684)">Horizontal</div>
</body></html>
